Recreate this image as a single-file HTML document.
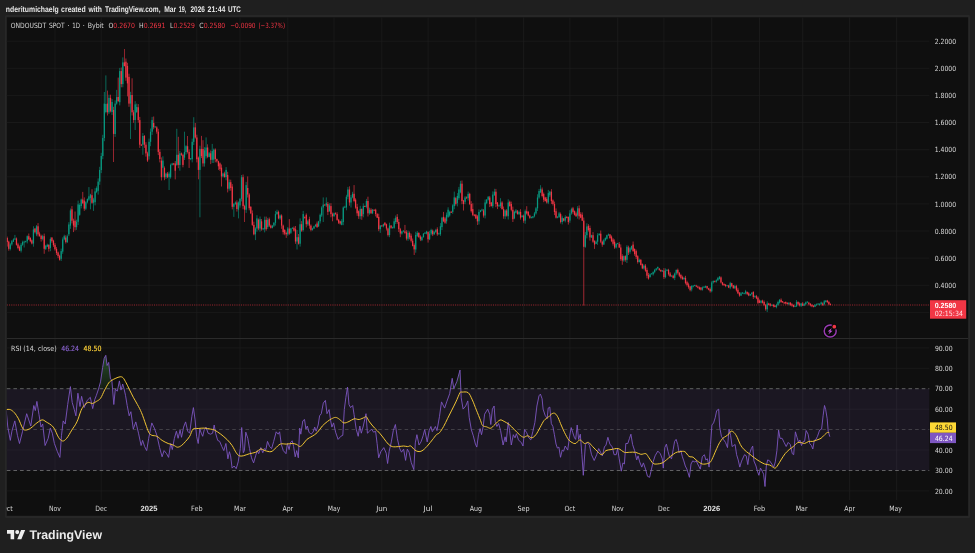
<!DOCTYPE html>
<html lang="en"><head><meta charset="utf-8"><title>ONDOUSDT SPOT 1D Bybit - TradingView</title>
<style>
html,body{margin:0;padding:0;background:#1f1f1f;}
body{width:975px;height:553px;overflow:hidden;}
svg{display:block}
svg text{font-family:"DejaVu Sans Condensed","DejaVu Sans","Liberation Sans",sans-serif;font-stretch:condensed;text-rendering:geometricPrecision;}
svg text.b{font-family:"Liberation Sans",sans-serif;font-stretch:normal;}
</style></head><body>
<svg width="975" height="553" viewBox="0 0 975 553">
<rect width="975" height="553" fill="#1f1f1f"/>
<rect x="4.9" y="15.1" width="965.3" height="503" rx="1.6" fill="#272727"/>
<rect x="6.8" y="17.3" width="961.4000000000001" height="498.49999999999994" fill="#0f0f0f"/>
<defs><clipPath id="ob"><rect x="6.8" y="338.5" width="922.5" height="50.24000000000001"/></clipPath><clipPath id="os"><rect x="6.8" y="470.46000000000004" width="922.5" height="29.539999999999964"/></clipPath>
<clipPath id="box"><rect x="6.4" y="17.3" width="961.8000000000001" height="498.49999999999994"/></clipPath>
<clipPath id="pane"><rect x="6.8" y="17.3" width="922.5" height="482.7"/></clipPath>
<linearGradient id="gob" x1="0" y1="338.5" x2="0" y2="388.74" gradientUnits="userSpaceOnUse"><stop offset="0" stop-color="#4caf50" stop-opacity="0.55"/><stop offset="1" stop-color="#4caf50" stop-opacity="0.08"/></linearGradient>
</defs>
<g stroke="#1e1e1e" stroke-width="0.7" fill="none">
<path d="M55.0 17.3V500.0"/>
<path d="M101.2 17.3V500.0"/>
<path d="M149.0 17.3V500.0"/>
<path d="M196.8 17.3V500.0"/>
<path d="M240.0 17.3V500.0"/>
<path d="M287.8 17.3V500.0"/>
<path d="M334.0 17.3V500.0"/>
<path d="M381.8 17.3V500.0"/>
<path d="M428.1 17.3V500.0"/>
<path d="M475.9 17.3V500.0"/>
<path d="M523.6 17.3V500.0"/>
<path d="M569.9 17.3V500.0"/>
<path d="M617.7 17.3V500.0"/>
<path d="M663.9 17.3V500.0"/>
<path d="M711.7 17.3V500.0"/>
<path d="M759.5 17.3V500.0"/>
<path d="M802.7 17.3V500.0"/>
<path d="M849.6 17.3V500.0"/>
<path d="M896.6 17.3V500.0"/>
<path d="M6.8 41.2H929.3"/>
<path d="M6.8 68.3H929.3"/>
<path d="M6.8 95.4H929.3"/>
<path d="M6.8 122.5H929.3"/>
<path d="M6.8 149.7H929.3"/>
<path d="M6.8 176.8H929.3"/>
<path d="M6.8 203.9H929.3"/>
<path d="M6.8 231.0H929.3"/>
<path d="M6.8 258.1H929.3"/>
<path d="M6.8 285.3H929.3"/>
<path d="M6.8 312.4H929.3"/>
<path d="M6.8 347.9H929.3"/>
<path d="M6.8 368.3H929.3"/>
<path d="M6.8 409.2H929.3"/>
<path d="M6.8 450.0H929.3"/>
<path d="M6.8 490.9H929.3"/>
</g>
<path d="M6.8 338.5H968.2" stroke="#2b2b2b" stroke-width="1.2"/>
<!-- RSI band -->
<rect x="6.8" y="388.7" width="922.5" height="81.7" fill="#7e57c2" fill-opacity="0.11"/>
<g stroke="#8f8f8f" stroke-width="0.8" stroke-dasharray="3.6 3.03" fill="none" opacity="0.8">
<path d="M6.8 388.7H929.3"/><path d="M6.8 429.6H929.3" opacity="0.6"/><path d="M6.8 470.5H929.3"/>
</g>
<g clip-path="url(#pane)">
<polygon points="4.9,388.7 4.9,412.7 6.2,410.6 7.8,427.1 10.3,440.4 11.9,431.2 14.8,420.9 17.4,435.3 19.5,443.5 22.6,431.2 26.7,413.7 30.8,426.0 33.8,405.5 35.3,410.6 36.9,401.4 39.0,414.7 41.0,427.1 42.7,424.0 45.1,445.5 48.2,438.3 50.3,428.1 52.3,433.2 54.4,443.5 57.4,451.7 59.9,457.4 61.5,435.3 63.2,420.9 65.2,424.0 67.7,404.5 70.4,386.6 72.2,402.4 74.3,409.6 75.9,415.8 77.9,393.2 80.0,406.5 81.6,396.3 84.1,407.6 87.2,400.4 90.3,397.3 92.7,408.6 94.8,399.4 96.4,395.3 98.5,389.1 100.5,381.9 102.6,367.6 104.2,358.3 105.8,355.3 107.1,365.5 108.7,362.4 110.4,378.8 111.8,379.9 113.8,404.5 115.3,389.1 117.3,391.2 119.4,380.9 121.0,390.1 122.7,384.0 124.1,389.1 125.5,395.3 127.2,405.5 129.2,415.8 130.9,411.7 133.3,429.1 135.8,421.9 138.5,433.2 141.1,445.5 142.6,440.4 144.6,446.5 146.7,450.6 148.7,438.3 151.8,422.9 154.3,428.1 156.9,435.3 159.6,447.6 162.1,456.8 164.1,450.6 166.6,453.7 168.6,457.4 170.7,443.5 172.3,449.6 174.4,438.3 176.4,431.2 178.1,438.3 180.1,430.1 181.5,437.3 183.6,427.1 185.6,421.9 187.7,431.2 189.7,433.2 191.8,416.8 193.4,407.6 195.1,419.9 196.6,436.3 198.2,443.5 199.8,429.1 201.3,433.2 202.7,436.3 204.4,429.1 206.0,427.1 208.1,433.2 210.5,434.2 212.6,433.2 214.2,425.0 215.6,433.2 217.7,440.4 219.7,441.4 221.8,446.5 223.8,450.6 225.9,443.5 227.9,458.8 229.4,451.7 230.6,455.8 232.1,468.1 234.1,466.0 236.2,468.7 238.2,461.9 240.3,448.6 241.7,427.5 243.3,452.7 244.4,450.6 245.8,432.2 247.8,438.3 249.5,448.6 251.5,457.8 253.6,462.9 255.6,455.8 257.3,450.6 258.7,453.7 260.8,447.6 262.8,452.7 264.3,448.6 265.9,449.6 267.5,441.4 269.6,446.5 271.6,448.6 273.7,441.4 276.2,431.8 278.2,434.2 279.6,431.8 281.3,444.5 283.3,450.6 286.0,453.7 287.4,443.5 289.1,449.6 290.5,442.4 292.2,440.8 293.6,446.5 295.2,456.8 296.7,450.6 298.3,457.8 299.7,428.1 300.8,434.2 302.8,420.9 304.5,419.5 305.9,429.1 307.3,426.0 309.0,432.2 311.0,434.2 313.1,432.2 314.7,427.1 316.2,431.2 318.2,425.0 319.6,415.8 321.3,413.7 323.3,403.1 325.4,400.4 327.0,413.7 329.1,409.6 330.5,419.9 331.9,427.1 333.6,422.9 335.6,432.2 338.1,439.4 340.8,436.3 342.8,435.3 344.3,409.6 345.9,397.3 347.5,387.1 349.0,404.5 350.6,407.6 352.7,405.5 354.1,414.7 356.2,429.1 358.2,436.3 359.8,426.0 361.3,433.2 363.3,426.0 366.0,413.7 367.4,433.2 369.5,431.2 371.5,429.1 373.6,432.2 375.6,431.2 377.1,443.5 378.7,457.8 380.8,451.7 383.8,447.6 386.2,453.2 387.6,463.5 389.2,451.2 391.3,441.9 393.3,430.6 395.4,424.5 397.4,438.8 399.5,448.1 401.5,452.2 403.6,449.1 405.6,460.4 407.3,449.1 409.1,452.2 411.2,462.4 413.8,469.6 415.3,442.9 416.9,434.7 419.0,445.0 421.0,441.9 423.1,435.8 424.7,429.6 427.2,441.9 429.2,430.6 430.9,426.5 432.3,431.7 435.4,426.5 437.0,430.6 439.5,416.3 441.5,401.9 444.6,408.1 446.7,401.9 449.7,393.7 452.2,378.3 453.8,388.6 456.9,381.4 460.0,370.1 461.2,397.8 463.1,409.1 465.7,406.0 467.8,400.9 469.2,417.3 471.3,429.6 473.3,435.8 475.4,444.0 476.8,447.1 478.5,434.7 480.1,428.6 481.5,434.7 483.2,426.5 484.6,414.2 487.7,409.1 489.7,414.2 490.8,424.5 492.4,409.1 494.1,406.0 495.3,422.4 496.9,426.5 498.6,423.5 500.6,430.6 503.1,445.0 505.1,436.8 506.2,441.9 508.2,422.4 509.6,430.6 511.3,445.0 513.3,434.7 515.0,437.8 516.4,433.7 518.5,439.9 521.5,442.9 523.0,446.0 524.6,429.6 526.7,432.7 528.7,437.8 530.8,439.9 532.8,431.7 534.9,422.4 536.9,406.0 539.0,395.8 540.4,394.1 542.1,398.8 543.1,409.1 545.1,415.3 547.2,418.3 548.2,408.1 549.8,407.1 551.3,423.5 552.9,426.5 554.4,434.7 556.0,444.0 557.4,448.1 558.9,447.1 560.5,457.3 562.2,450.1 563.6,451.2 565.2,446.0 567.7,450.1 569.7,435.8 571.2,427.6 572.8,432.7 574.5,437.8 575.7,439.4 577.2,425.0 578.6,439.4 580.3,434.2 581.9,454.7 583.3,475.3 585.4,444.5 587.4,442.4 589.5,445.5 591.5,454.7 594.2,460.5 596.7,454.7 598.7,448.6 600.8,452.7 602.4,455.8 604.5,446.5 605.9,445.5 607.9,437.3 610.0,444.5 612.1,446.5 614.1,454.7 616.2,454.7 617.6,448.6 619.2,458.8 621.3,471.2 622.9,462.9 624.4,464.0 625.8,443.5 627.8,443.5 629.5,438.3 630.9,434.2 632.6,444.5 634.6,450.6 636.7,459.9 638.1,455.8 639.7,461.9 641.8,467.1 643.4,462.9 645.5,469.1 647.5,476.3 649.6,477.3 651.0,471.2 653.1,461.9 655.1,455.8 657.8,451.1 660.3,453.7 662.3,458.8 663.3,468.1 664.8,447.6 666.4,444.1 668.1,451.7 669.5,456.8 671.5,458.8 673.2,449.6 674.6,441.4 676.1,439.4 677.7,444.5 679.1,452.7 680.8,450.6 682.4,456.8 683.8,460.9 685.3,466.0 686.9,469.1 687.9,472.2 689.4,477.3 691.0,464.0 692.7,460.9 694.7,461.9 696.2,460.9 698.2,465.0 700.3,469.1 702.3,456.8 704.4,454.7 705.8,459.9 707.4,458.8 709.1,467.1 710.5,444.5 711.9,425.0 713.6,422.9 715.2,417.8 716.7,410.6 718.7,409.2 719.7,427.1 721.4,436.3 723.4,439.4 725.5,442.4 727.5,447.6 729.0,429.1 730.6,435.3 732.1,446.5 733.7,445.5 735.1,444.5 736.6,454.7 738.2,459.9 739.8,467.1 741.3,461.9 742.1,459.9 744.5,454.7 746.2,455.8 747.8,464.6 749.2,454.7 751.3,448.6 752.7,446.1 753.9,460.9 756.0,466.0 757.4,471.2 758.9,475.3 760.5,468.1 762.2,471.2 763.6,474.2 765.0,486.5 766.3,466.0 767.7,459.9 769.7,460.9 771.8,464.0 773.8,467.1 775.3,461.9 776.9,450.6 778.6,430.1 780.0,438.3 782.1,438.3 784.1,442.4 786.2,446.5 788.2,442.4 790.3,444.5 792.3,453.7 793.7,454.7 795.4,431.8 797.0,437.3 798.5,442.4 799.9,440.0 801.5,445.5 803.2,441.4 804.6,441.4 806.1,430.5 808.1,434.2 809.7,443.5 811.4,445.5 812.8,449.0 814.3,440.4 815.9,439.4 817.5,436.3 819.6,430.1 821.6,429.1 823.1,415.8 824.5,405.5 825.7,409.6 827.2,418.8 828.2,431.2 829.8,436.7 829.8,388.7" fill="url(#gob)" clip-path="url(#ob)"/>
<polyline points="4.9,412.7 6.2,410.6 7.8,427.1 10.3,440.4 11.9,431.2 14.8,420.9 17.4,435.3 19.5,443.5 22.6,431.2 26.7,413.7 30.8,426.0 33.8,405.5 35.3,410.6 36.9,401.4 39.0,414.7 41.0,427.1 42.7,424.0 45.1,445.5 48.2,438.3 50.3,428.1 52.3,433.2 54.4,443.5 57.4,451.7 59.9,457.4 61.5,435.3 63.2,420.9 65.2,424.0 67.7,404.5 70.4,386.6 72.2,402.4 74.3,409.6 75.9,415.8 77.9,393.2 80.0,406.5 81.6,396.3 84.1,407.6 87.2,400.4 90.3,397.3 92.7,408.6 94.8,399.4 96.4,395.3 98.5,389.1 100.5,381.9 102.6,367.6 104.2,358.3 105.8,355.3 107.1,365.5 108.7,362.4 110.4,378.8 111.8,379.9 113.8,404.5 115.3,389.1 117.3,391.2 119.4,380.9 121.0,390.1 122.7,384.0 124.1,389.1 125.5,395.3 127.2,405.5 129.2,415.8 130.9,411.7 133.3,429.1 135.8,421.9 138.5,433.2 141.1,445.5 142.6,440.4 144.6,446.5 146.7,450.6 148.7,438.3 151.8,422.9 154.3,428.1 156.9,435.3 159.6,447.6 162.1,456.8 164.1,450.6 166.6,453.7 168.6,457.4 170.7,443.5 172.3,449.6 174.4,438.3 176.4,431.2 178.1,438.3 180.1,430.1 181.5,437.3 183.6,427.1 185.6,421.9 187.7,431.2 189.7,433.2 191.8,416.8 193.4,407.6 195.1,419.9 196.6,436.3 198.2,443.5 199.8,429.1 201.3,433.2 202.7,436.3 204.4,429.1 206.0,427.1 208.1,433.2 210.5,434.2 212.6,433.2 214.2,425.0 215.6,433.2 217.7,440.4 219.7,441.4 221.8,446.5 223.8,450.6 225.9,443.5 227.9,458.8 229.4,451.7 230.6,455.8 232.1,468.1 234.1,466.0 236.2,468.7 238.2,461.9 240.3,448.6 241.7,427.5 243.3,452.7 244.4,450.6 245.8,432.2 247.8,438.3 249.5,448.6 251.5,457.8 253.6,462.9 255.6,455.8 257.3,450.6 258.7,453.7 260.8,447.6 262.8,452.7 264.3,448.6 265.9,449.6 267.5,441.4 269.6,446.5 271.6,448.6 273.7,441.4 276.2,431.8 278.2,434.2 279.6,431.8 281.3,444.5 283.3,450.6 286.0,453.7 287.4,443.5 289.1,449.6 290.5,442.4 292.2,440.8 293.6,446.5 295.2,456.8 296.7,450.6 298.3,457.8 299.7,428.1 300.8,434.2 302.8,420.9 304.5,419.5 305.9,429.1 307.3,426.0 309.0,432.2 311.0,434.2 313.1,432.2 314.7,427.1 316.2,431.2 318.2,425.0 319.6,415.8 321.3,413.7 323.3,403.1 325.4,400.4 327.0,413.7 329.1,409.6 330.5,419.9 331.9,427.1 333.6,422.9 335.6,432.2 338.1,439.4 340.8,436.3 342.8,435.3 344.3,409.6 345.9,397.3 347.5,387.1 349.0,404.5 350.6,407.6 352.7,405.5 354.1,414.7 356.2,429.1 358.2,436.3 359.8,426.0 361.3,433.2 363.3,426.0 366.0,413.7 367.4,433.2 369.5,431.2 371.5,429.1 373.6,432.2 375.6,431.2 377.1,443.5 378.7,457.8 380.8,451.7 383.8,447.6 386.2,453.2 387.6,463.5 389.2,451.2 391.3,441.9 393.3,430.6 395.4,424.5 397.4,438.8 399.5,448.1 401.5,452.2 403.6,449.1 405.6,460.4 407.3,449.1 409.1,452.2 411.2,462.4 413.8,469.6 415.3,442.9 416.9,434.7 419.0,445.0 421.0,441.9 423.1,435.8 424.7,429.6 427.2,441.9 429.2,430.6 430.9,426.5 432.3,431.7 435.4,426.5 437.0,430.6 439.5,416.3 441.5,401.9 444.6,408.1 446.7,401.9 449.7,393.7 452.2,378.3 453.8,388.6 456.9,381.4 460.0,370.1 461.2,397.8 463.1,409.1 465.7,406.0 467.8,400.9 469.2,417.3 471.3,429.6 473.3,435.8 475.4,444.0 476.8,447.1 478.5,434.7 480.1,428.6 481.5,434.7 483.2,426.5 484.6,414.2 487.7,409.1 489.7,414.2 490.8,424.5 492.4,409.1 494.1,406.0 495.3,422.4 496.9,426.5 498.6,423.5 500.6,430.6 503.1,445.0 505.1,436.8 506.2,441.9 508.2,422.4 509.6,430.6 511.3,445.0 513.3,434.7 515.0,437.8 516.4,433.7 518.5,439.9 521.5,442.9 523.0,446.0 524.6,429.6 526.7,432.7 528.7,437.8 530.8,439.9 532.8,431.7 534.9,422.4 536.9,406.0 539.0,395.8 540.4,394.1 542.1,398.8 543.1,409.1 545.1,415.3 547.2,418.3 548.2,408.1 549.8,407.1 551.3,423.5 552.9,426.5 554.4,434.7 556.0,444.0 557.4,448.1 558.9,447.1 560.5,457.3 562.2,450.1 563.6,451.2 565.2,446.0 567.7,450.1 569.7,435.8 571.2,427.6 572.8,432.7 574.5,437.8 575.7,439.4 577.2,425.0 578.6,439.4 580.3,434.2 581.9,454.7 583.3,475.3 585.4,444.5 587.4,442.4 589.5,445.5 591.5,454.7 594.2,460.5 596.7,454.7 598.7,448.6 600.8,452.7 602.4,455.8 604.5,446.5 605.9,445.5 607.9,437.3 610.0,444.5 612.1,446.5 614.1,454.7 616.2,454.7 617.6,448.6 619.2,458.8 621.3,471.2 622.9,462.9 624.4,464.0 625.8,443.5 627.8,443.5 629.5,438.3 630.9,434.2 632.6,444.5 634.6,450.6 636.7,459.9 638.1,455.8 639.7,461.9 641.8,467.1 643.4,462.9 645.5,469.1 647.5,476.3 649.6,477.3 651.0,471.2 653.1,461.9 655.1,455.8 657.8,451.1 660.3,453.7 662.3,458.8 663.3,468.1 664.8,447.6 666.4,444.1 668.1,451.7 669.5,456.8 671.5,458.8 673.2,449.6 674.6,441.4 676.1,439.4 677.7,444.5 679.1,452.7 680.8,450.6 682.4,456.8 683.8,460.9 685.3,466.0 686.9,469.1 687.9,472.2 689.4,477.3 691.0,464.0 692.7,460.9 694.7,461.9 696.2,460.9 698.2,465.0 700.3,469.1 702.3,456.8 704.4,454.7 705.8,459.9 707.4,458.8 709.1,467.1 710.5,444.5 711.9,425.0 713.6,422.9 715.2,417.8 716.7,410.6 718.7,409.2 719.7,427.1 721.4,436.3 723.4,439.4 725.5,442.4 727.5,447.6 729.0,429.1 730.6,435.3 732.1,446.5 733.7,445.5 735.1,444.5 736.6,454.7 738.2,459.9 739.8,467.1 741.3,461.9 742.1,459.9 744.5,454.7 746.2,455.8 747.8,464.6 749.2,454.7 751.3,448.6 752.7,446.1 753.9,460.9 756.0,466.0 757.4,471.2 758.9,475.3 760.5,468.1 762.2,471.2 763.6,474.2 765.0,486.5 766.3,466.0 767.7,459.9 769.7,460.9 771.8,464.0 773.8,467.1 775.3,461.9 776.9,450.6 778.6,430.1 780.0,438.3 782.1,438.3 784.1,442.4 786.2,446.5 788.2,442.4 790.3,444.5 792.3,453.7 793.7,454.7 795.4,431.8 797.0,437.3 798.5,442.4 799.9,440.0 801.5,445.5 803.2,441.4 804.6,441.4 806.1,430.5 808.1,434.2 809.7,443.5 811.4,445.5 812.8,449.0 814.3,440.4 815.9,439.4 817.5,436.3 819.6,430.1 821.6,429.1 823.1,415.8 824.5,405.5 825.7,409.6 827.2,418.8 828.2,431.2 829.8,436.7" fill="none" stroke="#7e57c2" stroke-width="0.9" stroke-linejoin="round"/>
<path d="M4.9 410.2C5.1 410.1 5.3 409.7 6.2 409.6C7.0 409.5 8.9 409.1 10.3 409.6C11.6 410.1 13.0 411.2 14.4 412.7C15.7 414.2 17.1 416.3 18.5 418.8C19.8 421.4 21.4 426.2 22.6 428.1C23.8 430.0 24.3 430.1 25.6 430.1C27.0 430.1 28.9 429.3 30.8 428.1C32.6 426.9 35.0 424.3 36.9 422.9C38.8 421.6 40.5 420.0 42.1 419.9C43.6 419.7 44.3 420.7 46.2 421.9C48.0 423.1 51.3 424.5 53.3 427.1C55.4 429.6 56.9 435.0 58.5 437.3C60.0 439.6 61.2 440.8 62.6 441.0C63.9 441.2 65.1 440.1 66.7 438.3C68.2 436.5 70.1 432.9 71.8 430.1C73.5 427.4 75.4 425.2 76.9 421.9C78.5 418.7 79.8 413.4 81.0 410.6C82.2 407.9 82.9 406.9 84.1 405.5C85.3 404.1 86.8 402.8 88.2 402.4C89.6 402.1 90.9 403.6 92.3 403.5C93.7 403.3 95.0 402.3 96.4 401.4C97.8 400.6 99.1 400.2 100.5 398.3C101.9 396.5 103.2 392.7 104.6 390.1C106.0 387.6 107.5 384.6 108.7 382.9C109.9 381.3 110.6 381.1 111.8 380.3C113.0 379.5 114.5 378.8 115.9 378.2C117.3 377.6 118.8 376.9 120.0 376.8C121.2 376.7 122.1 376.8 123.1 377.8C124.1 378.8 125.1 381.1 126.2 382.9C127.2 384.8 128.0 386.7 129.2 389.1C130.4 391.5 132.0 394.7 133.3 397.3C134.7 399.9 136.1 401.9 137.4 404.5C138.8 407.1 140.2 409.4 141.5 412.7C142.9 415.9 144.4 420.7 145.6 424.0C146.8 427.2 147.7 430.3 148.7 432.2C149.7 434.1 150.4 434.6 151.8 435.3C153.2 435.9 155.2 435.4 156.9 436.3C158.6 437.1 160.2 439.2 162.1 440.4C163.9 441.6 166.3 442.7 168.2 443.5C170.1 444.2 171.8 444.5 173.3 445.1C174.9 445.7 176.1 447.1 177.4 447.2C178.8 447.2 180.2 446.5 181.5 445.5C182.9 444.6 184.3 442.9 185.6 441.4C187.0 439.9 188.5 438.3 189.7 436.3C191.0 434.2 191.7 430.4 193.1 429.1C194.5 427.8 196.3 428.7 198.2 428.5C200.1 428.3 202.3 428.0 204.4 428.1C206.4 428.2 208.8 428.8 210.5 429.1C212.2 429.4 212.9 429.3 214.6 430.1C216.3 431.0 218.7 432.7 220.8 434.2C222.8 435.8 225.0 437.5 226.9 439.4C228.8 441.2 230.5 443.3 232.1 445.5C233.6 447.7 235.0 451.0 236.2 452.7C237.4 454.4 238.0 455.3 239.2 455.8C240.4 456.3 241.6 456.1 243.3 455.8C245.0 455.4 247.4 454.3 249.5 453.7C251.5 453.1 253.8 453.1 255.6 452.3C257.5 451.5 259.2 449.3 260.8 449.0C262.3 448.7 263.2 450.2 264.9 450.6C266.6 451.1 269.3 452.0 271.0 451.7C272.7 451.3 273.6 449.9 275.1 448.6C276.7 447.3 278.4 444.8 280.3 444.1C282.1 443.3 284.4 444.2 286.4 444.1C288.5 444.0 290.9 443.4 292.6 443.5C294.3 443.5 295.5 444.0 296.7 444.5C297.9 445.0 298.7 446.5 299.7 446.5C300.8 446.5 301.6 445.7 302.8 444.5C304.0 443.3 305.4 440.7 306.9 439.4C308.5 438.0 310.3 437.4 312.1 436.3C313.8 435.2 315.5 434.3 317.2 432.6C318.9 430.9 320.6 427.9 322.3 426.0C324.0 424.2 325.9 422.7 327.4 421.5C329.0 420.3 330.2 419.5 331.5 418.8C332.9 418.2 334.3 417.3 335.6 417.4C337.0 417.5 338.4 418.5 339.7 419.5C341.1 420.4 342.3 422.6 343.8 422.9C345.4 423.3 347.3 422.2 349.0 421.5C350.7 420.8 352.4 419.2 354.1 418.8C355.8 418.5 357.5 419.7 359.2 419.5C360.9 419.2 363.2 417.9 364.4 417.4C365.6 417.0 365.6 416.0 366.4 416.8C367.3 417.5 368.1 420.0 369.5 421.9C370.9 423.8 372.9 426.2 374.6 428.1C376.3 430.0 378.2 431.4 379.7 433.2C381.3 435.0 382.7 437.1 384.1 438.8C385.5 440.6 386.8 442.7 388.2 444.0C389.6 445.3 390.6 446.2 392.3 446.6C394.0 447.1 396.6 446.7 398.5 446.6C400.3 446.5 402.1 446.0 403.6 446.0C405.1 446.0 406.5 446.6 407.7 446.6C408.9 446.6 409.6 445.4 410.8 446.0C412.0 446.6 413.5 449.2 414.9 450.1C416.2 451.1 417.6 451.6 419.0 451.6C420.3 451.6 421.5 451.2 423.1 450.1C424.6 449.0 426.7 446.7 428.2 445.0C429.7 443.3 430.9 441.6 432.3 439.9C433.7 438.2 435.2 435.9 436.4 434.7C437.6 433.5 438.3 434.1 439.5 432.7C440.7 431.3 442.2 428.9 443.6 426.5C445.0 424.1 446.3 421.1 447.7 418.3C449.1 415.6 450.4 412.9 451.8 410.1C453.2 407.4 454.5 404.8 455.9 401.9C457.3 399.0 459.0 394.3 460.0 392.7C461.0 391.1 460.7 392.1 462.1 392.1C463.4 392.1 466.5 391.4 468.2 392.7C469.9 394.0 470.9 397.0 472.3 399.9C473.7 402.8 475.0 406.7 476.4 410.1C477.8 413.5 479.5 417.8 480.5 420.4C481.5 422.9 481.5 424.4 482.6 425.5C483.6 426.6 485.3 426.5 486.7 426.9C488.0 427.4 489.4 428.6 490.8 428.2C492.1 427.8 493.3 425.9 494.9 424.5C496.4 423.1 498.5 420.5 500.0 420.0C501.5 419.5 502.6 420.7 504.1 421.4C505.6 422.2 507.5 423.1 509.2 424.5C510.9 425.9 512.6 427.9 514.4 429.6C516.1 431.3 517.9 433.5 519.5 434.7C521.0 436.0 522.2 437.0 523.6 437.2C525.0 437.4 526.3 435.7 527.7 435.8C529.1 435.9 530.4 438.0 531.8 437.8C533.2 437.6 534.5 436.5 535.9 434.7C537.3 433.0 538.6 430.0 540.0 427.6C541.4 425.2 542.7 422.1 544.1 420.4C545.5 418.7 547.0 418.3 548.2 417.3C549.4 416.3 550.3 414.9 551.3 414.2C552.3 413.5 553.3 412.9 554.4 413.2C555.4 413.5 556.4 414.6 557.4 416.3C558.5 418.0 559.3 420.7 560.5 423.5C561.7 426.2 563.2 430.0 564.6 432.7C566.0 435.4 567.4 438.2 568.7 439.9C570.1 441.6 571.9 442.4 572.8 442.9C573.7 443.5 573.6 443.4 574.1 443.5C574.6 443.5 575.4 443.6 575.9 443.4C576.4 443.1 576.5 442.6 577.2 442.0C577.9 441.5 579.1 439.7 580.3 440.0C581.5 440.2 583.0 443.1 584.4 443.5C585.7 443.9 587.1 441.9 588.5 442.4C589.8 442.9 591.0 445.0 592.6 446.5C594.1 448.1 596.2 450.3 597.7 451.7C599.2 453.0 600.4 454.9 601.8 454.7C603.2 454.6 604.4 451.5 605.9 450.6C607.4 449.8 609.0 450.0 611.0 449.6C613.1 449.3 616.0 448.1 618.2 448.6C620.4 449.0 622.5 451.7 624.4 452.3C626.2 452.9 627.6 452.3 629.5 452.3C631.4 452.3 633.8 451.9 635.6 452.3C637.5 452.6 639.1 454.1 640.8 454.3C642.5 454.6 644.5 453.1 645.9 453.7C647.3 454.3 647.8 456.2 649.0 457.8C650.2 459.4 651.7 462.3 653.1 463.4C654.4 464.4 655.6 464.0 657.2 464.0C658.7 463.9 660.8 463.6 662.3 462.9C663.8 462.3 665.0 461.0 666.4 459.9C667.8 458.8 669.0 457.6 670.5 456.4C672.1 455.2 674.1 453.5 675.6 452.7C677.2 451.9 678.2 451.8 679.7 451.7C681.3 451.5 683.3 450.9 684.9 451.7C686.4 452.5 687.6 455.5 689.0 456.4C690.3 457.3 691.7 456.5 693.1 457.2C694.4 458.0 695.6 459.8 697.2 460.9C698.7 462.0 700.6 463.5 702.3 464.0C704.0 464.4 706.1 463.9 707.4 463.6C708.8 463.2 709.5 463.2 710.5 461.9C711.5 460.6 712.6 458.0 713.6 455.8C714.6 453.5 715.6 450.8 716.7 448.6C717.7 446.4 718.7 444.1 719.7 442.4C720.8 440.7 721.8 439.4 722.8 438.3C723.8 437.3 724.9 437.0 725.9 436.3C726.9 435.5 728.1 434.7 729.0 433.8C729.8 433.0 730.2 431.4 731.0 431.2C731.9 430.9 733.1 431.6 734.1 432.6C735.1 433.6 736.2 435.3 737.2 437.3C738.2 439.3 739.1 442.4 740.3 444.5C741.4 446.5 742.6 448.1 744.1 449.6C745.6 451.2 747.5 452.4 749.2 453.7C750.9 455.1 752.6 456.6 754.4 457.8C756.1 459.1 757.8 460.3 759.5 461.3C761.2 462.3 762.9 463.4 764.6 464.0C766.3 464.6 768.4 464.5 769.7 465.0C771.1 465.5 771.9 466.5 772.8 467.1C773.7 467.6 774.4 468.4 775.3 468.1C776.1 467.7 777.0 466.4 777.9 465.0C778.9 463.6 779.8 461.8 781.0 459.9C782.2 458.0 783.8 455.4 785.1 453.7C786.5 452.0 787.9 450.8 789.2 449.6C790.6 448.4 792.0 447.7 793.3 446.5C794.7 445.4 796.2 443.5 797.4 442.8C798.6 442.2 799.3 442.3 800.5 442.4C801.7 442.5 803.2 443.6 804.6 443.5C806.0 443.3 807.4 441.8 808.7 441.4C810.1 441.1 811.5 441.6 812.8 441.4C814.2 441.2 815.6 440.5 816.9 440.0C818.3 439.5 819.8 439.1 821.0 438.3C822.2 437.5 823.1 436.2 824.1 435.3C825.1 434.3 826.3 433.0 827.2 432.6C828.0 432.1 828.9 432.6 829.2 432.6" fill="none" stroke="#f0c534" stroke-width="1"/>
<!-- price line -->
<path d="M6.8 305.0H929.3" stroke="#f23645" stroke-width="0.9" stroke-dasharray="1.1 1.13" opacity="0.68"/>
<g>
<path d="M7.21 236.6V246.6" stroke="#f23645" stroke-width="0.72" opacity="0.9"/>
<rect x="6.58" y="238.0" width="1.26" height="4.1" fill="#f23645"/>
<path d="M8.75 240.7V250.7" stroke="#f23645" stroke-width="0.72" opacity="0.9"/>
<rect x="8.12" y="241.6" width="1.26" height="7.2" fill="#f23645"/>
<path d="M10.29 243.1V250.4" stroke="#089981" stroke-width="0.72" opacity="0.9"/>
<rect x="9.66" y="244.4" width="1.26" height="4.5" fill="#089981"/>
<path d="M11.84 240.0V245.6" stroke="#089981" stroke-width="0.72" opacity="0.9"/>
<rect x="11.21" y="241.2" width="1.26" height="3.2" fill="#089981"/>
<path d="M13.38 238.3V242.0" stroke="#089981" stroke-width="0.72" opacity="0.9"/>
<rect x="12.75" y="239.4" width="1.26" height="2.3" fill="#089981"/>
<path d="M14.92 234.9V240.0" stroke="#089981" stroke-width="0.72" opacity="0.9"/>
<rect x="14.29" y="238.5" width="1.26" height="0.9" fill="#089981"/>
<path d="M16.46 237.5V245.6" stroke="#f23645" stroke-width="0.72" opacity="0.9"/>
<rect x="15.83" y="238.5" width="1.26" height="6.3" fill="#f23645"/>
<path d="M18.00 242.8V249.3" stroke="#f23645" stroke-width="0.72" opacity="0.9"/>
<rect x="17.37" y="244.4" width="1.26" height="3.6" fill="#f23645"/>
<path d="M19.54 245.6V251.1" stroke="#f23645" stroke-width="0.72" opacity="0.9"/>
<rect x="18.91" y="247.1" width="1.26" height="3.6" fill="#f23645"/>
<path d="M21.08 243.1V252.5" stroke="#089981" stroke-width="0.72" opacity="0.9"/>
<rect x="20.45" y="244.8" width="1.26" height="5.9" fill="#089981"/>
<path d="M22.63 240.7V245.8" stroke="#089981" stroke-width="0.72" opacity="0.9"/>
<rect x="22.00" y="242.1" width="1.26" height="2.7" fill="#089981"/>
<path d="M24.17 240.7V247.5" stroke="#089981" stroke-width="0.72" opacity="0.9"/>
<rect x="23.54" y="241.6" width="1.26" height="0.9" fill="#089981"/>
<path d="M25.71 240.7V242.5" stroke="#089981" stroke-width="0.72" opacity="0.9"/>
<rect x="25.08" y="241.2" width="1.26" height="0.9" fill="#089981"/>
<path d="M27.25 235.4V243.4" stroke="#089981" stroke-width="0.72" opacity="0.9"/>
<rect x="26.62" y="236.2" width="1.26" height="5.0" fill="#089981"/>
<path d="M28.79 233.5V239.8" stroke="#f23645" stroke-width="0.72" opacity="0.9"/>
<rect x="28.16" y="236.2" width="1.26" height="3.2" fill="#f23645"/>
<path d="M30.33 237.2V242.3" stroke="#f23645" stroke-width="0.72" opacity="0.9"/>
<rect x="29.70" y="238.0" width="1.26" height="3.2" fill="#f23645"/>
<path d="M31.88 239.4V244.4" stroke="#f23645" stroke-width="0.72" opacity="0.9"/>
<rect x="31.25" y="240.3" width="1.26" height="3.2" fill="#f23645"/>
<path d="M33.42 226.3V246.7" stroke="#089981" stroke-width="0.72" opacity="0.9"/>
<rect x="32.79" y="229.5" width="1.26" height="14.0" fill="#089981"/>
<path d="M34.96 228.1V233.4" stroke="#f23645" stroke-width="0.72" opacity="0.9"/>
<rect x="34.33" y="228.6" width="1.26" height="3.6" fill="#f23645"/>
<path d="M36.50 225.1V236.2" stroke="#089981" stroke-width="0.72" opacity="0.9"/>
<rect x="35.87" y="226.3" width="1.26" height="8.1" fill="#089981"/>
<path d="M38.04 223.1V236.5" stroke="#f23645" stroke-width="0.72" opacity="0.9"/>
<rect x="37.41" y="226.3" width="1.26" height="8.1" fill="#f23645"/>
<path d="M39.58 231.8V236.6" stroke="#f23645" stroke-width="0.72" opacity="0.9"/>
<rect x="38.95" y="233.5" width="1.26" height="2.7" fill="#f23645"/>
<path d="M41.13 234.6V241.6" stroke="#f23645" stroke-width="0.72" opacity="0.9"/>
<rect x="40.50" y="235.8" width="1.26" height="3.2" fill="#f23645"/>
<path d="M42.67 234.8V240.4" stroke="#089981" stroke-width="0.72" opacity="0.9"/>
<rect x="42.04" y="236.2" width="1.26" height="2.7" fill="#089981"/>
<path d="M44.21 233.6V253.8" stroke="#f23645" stroke-width="0.72" opacity="0.9"/>
<rect x="43.58" y="236.2" width="1.26" height="12.6" fill="#f23645"/>
<path d="M45.75 244.8V250.0" stroke="#089981" stroke-width="0.72" opacity="0.9"/>
<rect x="45.12" y="245.7" width="1.26" height="3.2" fill="#089981"/>
<path d="M47.29 243.7V246.9" stroke="#089981" stroke-width="0.72" opacity="0.9"/>
<rect x="46.66" y="244.8" width="1.26" height="1.8" fill="#089981"/>
<path d="M48.83 244.3V251.6" stroke="#f23645" stroke-width="0.72" opacity="0.9"/>
<rect x="48.20" y="244.8" width="1.26" height="4.1" fill="#f23645"/>
<path d="M50.38 237.3V251.2" stroke="#089981" stroke-width="0.72" opacity="0.9"/>
<rect x="49.75" y="238.9" width="1.26" height="9.0" fill="#089981"/>
<path d="M51.92 237.1V242.8" stroke="#f23645" stroke-width="0.72" opacity="0.9"/>
<rect x="51.29" y="237.6" width="1.26" height="3.6" fill="#f23645"/>
<path d="M53.46 239.7V246.9" stroke="#f23645" stroke-width="0.72" opacity="0.9"/>
<rect x="52.83" y="240.7" width="1.26" height="4.5" fill="#f23645"/>
<path d="M55.00 243.0V250.7" stroke="#f23645" stroke-width="0.72" opacity="0.9"/>
<rect x="54.37" y="244.8" width="1.26" height="4.5" fill="#f23645"/>
<path d="M56.54 247.1V255.0" stroke="#f23645" stroke-width="0.72" opacity="0.9"/>
<rect x="55.91" y="248.9" width="1.26" height="4.1" fill="#f23645"/>
<path d="M58.08 251.5V258.1" stroke="#f23645" stroke-width="0.72" opacity="0.9"/>
<rect x="57.45" y="252.5" width="1.26" height="3.6" fill="#f23645"/>
<path d="M59.62 254.6V260.6" stroke="#f23645" stroke-width="0.72" opacity="0.9"/>
<rect x="58.99" y="255.7" width="1.26" height="4.1" fill="#f23645"/>
<path d="M61.17 248.6V261.0" stroke="#089981" stroke-width="0.72" opacity="0.9"/>
<rect x="60.54" y="251.1" width="1.26" height="7.7" fill="#089981"/>
<path d="M62.71 237.4V253.8" stroke="#089981" stroke-width="0.72" opacity="0.9"/>
<rect x="62.08" y="239.4" width="1.26" height="12.2" fill="#089981"/>
<path d="M64.25 234.7V240.3" stroke="#089981" stroke-width="0.72" opacity="0.9"/>
<rect x="63.62" y="236.2" width="1.26" height="3.2" fill="#089981"/>
<path d="M65.79 235.3V243.5" stroke="#f23645" stroke-width="0.72" opacity="0.9"/>
<rect x="65.16" y="237.6" width="1.26" height="4.5" fill="#f23645"/>
<path d="M67.33 234.5V243.0" stroke="#089981" stroke-width="0.72" opacity="0.9"/>
<rect x="66.70" y="236.2" width="1.26" height="5.9" fill="#089981"/>
<path d="M68.87 222.2V236.1" stroke="#089981" stroke-width="0.72" opacity="0.9"/>
<rect x="68.24" y="224.5" width="1.26" height="9.8" fill="#089981"/>
<path d="M70.42 208.5V228.8" stroke="#089981" stroke-width="0.72" opacity="0.9"/>
<rect x="69.79" y="210.4" width="1.26" height="15.2" fill="#089981"/>
<path d="M71.96 206.1V223.4" stroke="#f23645" stroke-width="0.72" opacity="0.9"/>
<rect x="71.33" y="209.3" width="1.26" height="11.4" fill="#f23645"/>
<path d="M73.50 218.7V232.1" stroke="#f23645" stroke-width="0.72" opacity="0.9"/>
<rect x="72.87" y="220.7" width="1.26" height="4.9" fill="#f23645"/>
<path d="M75.04 211.5V230.4" stroke="#f23645" stroke-width="0.72" opacity="0.9"/>
<rect x="74.41" y="220.7" width="1.26" height="6.5" fill="#f23645"/>
<path d="M76.58 219.7V229.9" stroke="#089981" stroke-width="0.72" opacity="0.9"/>
<rect x="75.95" y="221.8" width="1.26" height="5.4" fill="#089981"/>
<path d="M78.12 200.6V225.0" stroke="#089981" stroke-width="0.72" opacity="0.9"/>
<rect x="77.49" y="204.4" width="1.26" height="17.4" fill="#089981"/>
<path d="M79.67 203.3V215.8" stroke="#089981" stroke-width="0.72" opacity="0.9"/>
<rect x="79.04" y="205.0" width="1.26" height="9.8" fill="#089981"/>
<path d="M81.21 198.6V208.4" stroke="#089981" stroke-width="0.72" opacity="0.9"/>
<rect x="80.58" y="199.5" width="1.26" height="6.5" fill="#089981"/>
<path d="M82.75 191.9V203.7" stroke="#f23645" stroke-width="0.72" opacity="0.9"/>
<rect x="82.12" y="199.5" width="1.26" height="3.8" fill="#f23645"/>
<path d="M84.29 197.4V210.9" stroke="#f23645" stroke-width="0.72" opacity="0.9"/>
<rect x="83.66" y="200.6" width="1.26" height="8.1" fill="#f23645"/>
<path d="M85.83 201.2V210.1" stroke="#089981" stroke-width="0.72" opacity="0.9"/>
<rect x="85.20" y="202.2" width="1.26" height="6.5" fill="#089981"/>
<path d="M87.37 198.4V203.4" stroke="#089981" stroke-width="0.72" opacity="0.9"/>
<rect x="86.74" y="199.0" width="1.26" height="3.3" fill="#089981"/>
<path d="M88.92 187.1V200.8" stroke="#089981" stroke-width="0.72" opacity="0.9"/>
<rect x="88.29" y="196.3" width="1.26" height="3.3" fill="#089981"/>
<path d="M90.46 193.8V209.3" stroke="#089981" stroke-width="0.72" opacity="0.9"/>
<rect x="89.83" y="194.6" width="1.26" height="3.3" fill="#089981"/>
<path d="M92.00 189.2V203.8" stroke="#f23645" stroke-width="0.72" opacity="0.9"/>
<rect x="91.37" y="195.2" width="1.26" height="7.6" fill="#f23645"/>
<path d="M93.54 197.8V210.9" stroke="#089981" stroke-width="0.72" opacity="0.9"/>
<rect x="92.91" y="199.5" width="1.26" height="3.3" fill="#089981"/>
<path d="M95.08 188.2V205.4" stroke="#089981" stroke-width="0.72" opacity="0.9"/>
<rect x="94.45" y="191.4" width="1.26" height="10.8" fill="#089981"/>
<path d="M96.62 186.4V193.1" stroke="#089981" stroke-width="0.72" opacity="0.9"/>
<rect x="95.99" y="188.1" width="1.26" height="3.8" fill="#089981"/>
<path d="M98.16 178.4V194.6" stroke="#089981" stroke-width="0.72" opacity="0.9"/>
<rect x="97.53" y="181.6" width="1.26" height="9.2" fill="#089981"/>
<path d="M99.71 166.8V184.8" stroke="#089981" stroke-width="0.72" opacity="0.9"/>
<rect x="99.08" y="170.0" width="1.26" height="11.6" fill="#089981"/>
<path d="M101.25 152.8V173.1" stroke="#089981" stroke-width="0.72" opacity="0.9"/>
<rect x="100.62" y="156.0" width="1.26" height="14.0" fill="#089981"/>
<path d="M102.79 134.8V159.2" stroke="#089981" stroke-width="0.72" opacity="0.9"/>
<rect x="102.16" y="138.0" width="1.26" height="18.0" fill="#089981"/>
<path d="M104.33 92.0V141.2" stroke="#089981" stroke-width="0.72" opacity="0.9"/>
<rect x="103.70" y="103.6" width="1.26" height="34.4" fill="#089981"/>
<path d="M105.87 75.4V113.3" stroke="#089981" stroke-width="0.72" opacity="0.9"/>
<rect x="105.24" y="104.0" width="1.26" height="8.0" fill="#089981"/>
<path d="M107.41 90.6V115.5" stroke="#f23645" stroke-width="0.72" opacity="0.9"/>
<rect x="106.78" y="103.6" width="1.26" height="8.7" fill="#f23645"/>
<path d="M108.96 94.7V114.0" stroke="#089981" stroke-width="0.72" opacity="0.9"/>
<rect x="108.33" y="97.9" width="1.26" height="14.4" fill="#089981"/>
<path d="M110.50 94.7V112.4" stroke="#f23645" stroke-width="0.72" opacity="0.9"/>
<rect x="109.87" y="97.9" width="1.26" height="13.0" fill="#f23645"/>
<path d="M112.04 99.0V114.9" stroke="#089981" stroke-width="0.72" opacity="0.9"/>
<rect x="111.41" y="102.0" width="1.26" height="10.0" fill="#089981"/>
<path d="M113.58 106.8V162.0" stroke="#f23645" stroke-width="0.72" opacity="0.9"/>
<rect x="112.95" y="110.0" width="1.26" height="23.9" fill="#f23645"/>
<path d="M115.12 100.4V136.9" stroke="#089981" stroke-width="0.72" opacity="0.9"/>
<rect x="114.49" y="103.6" width="1.26" height="30.4" fill="#089981"/>
<path d="M116.66 89.9V104.7" stroke="#089981" stroke-width="0.72" opacity="0.9"/>
<rect x="116.03" y="97.1" width="1.26" height="6.5" fill="#089981"/>
<path d="M118.21 77.6V102.1" stroke="#f23645" stroke-width="0.72" opacity="0.9"/>
<rect x="117.58" y="97.0" width="1.26" height="4.0" fill="#f23645"/>
<path d="M119.75 67.9V105.4" stroke="#089981" stroke-width="0.72" opacity="0.9"/>
<rect x="119.12" y="71.1" width="1.26" height="31.1" fill="#089981"/>
<path d="M121.29 67.5V87.3" stroke="#f23645" stroke-width="0.72" opacity="0.9"/>
<rect x="120.66" y="71.1" width="1.26" height="13.0" fill="#f23645"/>
<path d="M122.83 57.4V87.3" stroke="#089981" stroke-width="0.72" opacity="0.9"/>
<rect x="122.20" y="62.4" width="1.26" height="21.7" fill="#089981"/>
<path d="M124.37 49.0V66.5" stroke="#f23645" stroke-width="0.72" opacity="0.9"/>
<rect x="123.74" y="62.4" width="1.26" height="3.6" fill="#f23645"/>
<path d="M125.91 58.5V80.8" stroke="#f23645" stroke-width="0.72" opacity="0.9"/>
<rect x="125.28" y="61.7" width="1.26" height="15.9" fill="#f23645"/>
<path d="M127.46 62.8V96.4" stroke="#f23645" stroke-width="0.72" opacity="0.9"/>
<rect x="126.83" y="66.0" width="1.26" height="17.4" fill="#f23645"/>
<path d="M129.00 73.7V106.8" stroke="#f23645" stroke-width="0.72" opacity="0.9"/>
<rect x="128.37" y="76.9" width="1.26" height="26.7" fill="#f23645"/>
<path d="M130.54 91.8V139.0" stroke="#089981" stroke-width="0.72" opacity="0.9"/>
<rect x="129.91" y="95.0" width="1.26" height="8.6" fill="#089981"/>
<path d="M132.08 78.3V115.5" stroke="#f23645" stroke-width="0.72" opacity="0.9"/>
<rect x="131.45" y="95.0" width="1.26" height="17.3" fill="#f23645"/>
<path d="M133.62 110.2V122.8" stroke="#f23645" stroke-width="0.72" opacity="0.9"/>
<rect x="132.99" y="112.3" width="1.26" height="7.7" fill="#f23645"/>
<path d="M135.16 101.2V130.0" stroke="#089981" stroke-width="0.72" opacity="0.9"/>
<rect x="134.53" y="104.4" width="1.26" height="15.6" fill="#089981"/>
<path d="M136.70 103.6V112.9" stroke="#089981" stroke-width="0.72" opacity="0.9"/>
<rect x="136.07" y="107.0" width="1.26" height="5.0" fill="#089981"/>
<path d="M138.25 104.1V122.7" stroke="#f23645" stroke-width="0.72" opacity="0.9"/>
<rect x="137.62" y="107.3" width="1.26" height="12.7" fill="#f23645"/>
<path d="M139.79 116.9V147.9" stroke="#f23645" stroke-width="0.72" opacity="0.9"/>
<rect x="139.16" y="120.1" width="1.26" height="24.6" fill="#f23645"/>
<path d="M141.33 143.9V146.0" stroke="#f23645" stroke-width="0.72" opacity="0.9"/>
<rect x="140.70" y="144.7" width="1.26" height="0.9" fill="#f23645"/>
<path d="M142.87 133.1V154.8" stroke="#089981" stroke-width="0.72" opacity="0.9"/>
<rect x="142.24" y="136.0" width="1.26" height="8.7" fill="#089981"/>
<path d="M144.41 135.0V147.9" stroke="#f23645" stroke-width="0.72" opacity="0.9"/>
<rect x="143.78" y="136.0" width="1.26" height="8.7" fill="#f23645"/>
<path d="M145.95 142.2V156.6" stroke="#f23645" stroke-width="0.72" opacity="0.9"/>
<rect x="145.32" y="144.7" width="1.26" height="8.7" fill="#f23645"/>
<path d="M147.50 151.7V161.9" stroke="#f23645" stroke-width="0.72" opacity="0.9"/>
<rect x="146.87" y="153.4" width="1.26" height="7.2" fill="#f23645"/>
<path d="M149.04 138.6V159.5" stroke="#089981" stroke-width="0.72" opacity="0.9"/>
<rect x="148.41" y="141.8" width="1.26" height="14.5" fill="#089981"/>
<path d="M150.58 128.5V146.2" stroke="#089981" stroke-width="0.72" opacity="0.9"/>
<rect x="149.95" y="131.7" width="1.26" height="10.1" fill="#089981"/>
<path d="M152.12 116.9V134.9" stroke="#089981" stroke-width="0.72" opacity="0.9"/>
<rect x="151.49" y="120.1" width="1.26" height="11.6" fill="#089981"/>
<path d="M153.66 116.5V129.3" stroke="#f23645" stroke-width="0.72" opacity="0.9"/>
<rect x="153.03" y="123.0" width="1.26" height="4.3" fill="#f23645"/>
<path d="M155.20 126.2V127.8" stroke="#089981" stroke-width="0.72" opacity="0.9"/>
<rect x="154.57" y="126.5" width="1.26" height="0.9" fill="#089981"/>
<path d="M156.75 126.2V133.7" stroke="#f23645" stroke-width="0.72" opacity="0.9"/>
<rect x="156.12" y="127.4" width="1.26" height="4.3" fill="#f23645"/>
<path d="M158.29 128.8V155.1" stroke="#f23645" stroke-width="0.72" opacity="0.9"/>
<rect x="157.66" y="131.7" width="1.26" height="20.2" fill="#f23645"/>
<path d="M159.83 149.2V162.4" stroke="#f23645" stroke-width="0.72" opacity="0.9"/>
<rect x="159.20" y="151.9" width="1.26" height="7.2" fill="#f23645"/>
<path d="M161.37 157.4V180.5" stroke="#f23645" stroke-width="0.72" opacity="0.9"/>
<rect x="160.74" y="160.6" width="1.26" height="16.6" fill="#f23645"/>
<path d="M162.91 156.3V177.3" stroke="#089981" stroke-width="0.72" opacity="0.9"/>
<rect x="162.28" y="160.6" width="1.26" height="7.2" fill="#089981"/>
<path d="M164.45 166.4V180.2" stroke="#f23645" stroke-width="0.72" opacity="0.9"/>
<rect x="163.82" y="167.9" width="1.26" height="9.4" fill="#f23645"/>
<path d="M166.00 172.7V179.0" stroke="#089981" stroke-width="0.72" opacity="0.9"/>
<rect x="165.37" y="173.6" width="1.26" height="3.6" fill="#089981"/>
<path d="M167.54 172.0V178.2" stroke="#f23645" stroke-width="0.72" opacity="0.9"/>
<rect x="166.91" y="173.6" width="1.26" height="3.6" fill="#f23645"/>
<path d="M169.08 171.6V190.0" stroke="#089981" stroke-width="0.72" opacity="0.9"/>
<rect x="168.45" y="173.6" width="1.26" height="3.6" fill="#089981"/>
<path d="M170.62 163.6V178.7" stroke="#089981" stroke-width="0.72" opacity="0.9"/>
<rect x="169.99" y="165.0" width="1.26" height="12.3" fill="#089981"/>
<path d="M172.16 162.8V165.5" stroke="#089981" stroke-width="0.72" opacity="0.9"/>
<rect x="171.53" y="163.5" width="1.26" height="1.4" fill="#089981"/>
<path d="M173.70 162.9V165.3" stroke="#f23645" stroke-width="0.72" opacity="0.9"/>
<rect x="173.07" y="163.5" width="1.26" height="0.9" fill="#f23645"/>
<path d="M175.24 161.1V179.4" stroke="#f23645" stroke-width="0.72" opacity="0.9"/>
<rect x="174.61" y="163.5" width="1.26" height="7.2" fill="#f23645"/>
<path d="M176.79 128.8V165.8" stroke="#089981" stroke-width="0.72" opacity="0.9"/>
<rect x="176.16" y="154.8" width="1.26" height="10.1" fill="#089981"/>
<path d="M178.33 136.8V168.2" stroke="#f23645" stroke-width="0.72" opacity="0.9"/>
<rect x="177.70" y="154.8" width="1.26" height="10.1" fill="#f23645"/>
<path d="M179.87 151.0V170.7" stroke="#089981" stroke-width="0.72" opacity="0.9"/>
<rect x="179.24" y="153.4" width="1.26" height="11.6" fill="#089981"/>
<path d="M181.41 152.5V155.9" stroke="#f23645" stroke-width="0.72" opacity="0.9"/>
<rect x="180.78" y="153.4" width="1.26" height="1.4" fill="#f23645"/>
<path d="M182.95 153.6V167.3" stroke="#f23645" stroke-width="0.72" opacity="0.9"/>
<rect x="182.32" y="154.8" width="1.26" height="10.1" fill="#f23645"/>
<path d="M184.49 131.7V160.0" stroke="#089981" stroke-width="0.72" opacity="0.9"/>
<rect x="183.86" y="151.9" width="1.26" height="5.8" fill="#089981"/>
<path d="M186.04 145.2V154.6" stroke="#089981" stroke-width="0.72" opacity="0.9"/>
<rect x="185.41" y="146.2" width="1.26" height="5.8" fill="#089981"/>
<path d="M187.58 136.0V153.5" stroke="#f23645" stroke-width="0.72" opacity="0.9"/>
<rect x="186.95" y="146.2" width="1.26" height="5.8" fill="#f23645"/>
<path d="M189.12 149.5V167.9" stroke="#f23645" stroke-width="0.72" opacity="0.9"/>
<rect x="188.49" y="151.9" width="1.26" height="7.2" fill="#f23645"/>
<path d="M190.66 158.1V160.2" stroke="#089981" stroke-width="0.72" opacity="0.9"/>
<rect x="190.03" y="158.3" width="1.26" height="0.9" fill="#089981"/>
<path d="M192.20 138.6V162.4" stroke="#089981" stroke-width="0.72" opacity="0.9"/>
<rect x="191.57" y="141.8" width="1.26" height="17.4" fill="#089981"/>
<path d="M193.74 117.2V145.0" stroke="#089981" stroke-width="0.72" opacity="0.9"/>
<rect x="193.11" y="127.4" width="1.26" height="14.5" fill="#089981"/>
<path d="M195.29 123.0V138.6" stroke="#f23645" stroke-width="0.72" opacity="0.9"/>
<rect x="194.66" y="127.4" width="1.26" height="10.1" fill="#f23645"/>
<path d="M196.83 134.7V162.4" stroke="#f23645" stroke-width="0.72" opacity="0.9"/>
<rect x="196.20" y="137.5" width="1.26" height="21.7" fill="#f23645"/>
<path d="M198.37 156.5V179.3" stroke="#f23645" stroke-width="0.72" opacity="0.9"/>
<rect x="197.74" y="157.6" width="1.26" height="12.3" fill="#f23645"/>
<path d="M199.91 145.7V217.3" stroke="#089981" stroke-width="0.72" opacity="0.9"/>
<rect x="199.28" y="148.9" width="1.26" height="21.0" fill="#089981"/>
<path d="M201.45 135.9V158.1" stroke="#f23645" stroke-width="0.72" opacity="0.9"/>
<rect x="200.82" y="148.9" width="1.26" height="7.2" fill="#f23645"/>
<path d="M202.99 140.2V166.6" stroke="#f23645" stroke-width="0.72" opacity="0.9"/>
<rect x="202.36" y="148.9" width="1.26" height="14.5" fill="#f23645"/>
<path d="M204.54 147.2V166.6" stroke="#089981" stroke-width="0.72" opacity="0.9"/>
<rect x="203.91" y="150.4" width="1.26" height="13.0" fill="#089981"/>
<path d="M206.08 137.4V158.5" stroke="#089981" stroke-width="0.72" opacity="0.9"/>
<rect x="205.45" y="147.5" width="1.26" height="8.7" fill="#089981"/>
<path d="M207.62 144.3V158.2" stroke="#f23645" stroke-width="0.72" opacity="0.9"/>
<rect x="206.99" y="147.5" width="1.26" height="9.4" fill="#f23645"/>
<path d="M209.16 152.0V157.3" stroke="#089981" stroke-width="0.72" opacity="0.9"/>
<rect x="208.53" y="153.3" width="1.26" height="3.6" fill="#089981"/>
<path d="M210.70 150.5V164.1" stroke="#f23645" stroke-width="0.72" opacity="0.9"/>
<rect x="210.07" y="153.3" width="1.26" height="6.5" fill="#f23645"/>
<path d="M212.24 143.9V163.0" stroke="#089981" stroke-width="0.72" opacity="0.9"/>
<rect x="211.61" y="151.1" width="1.26" height="8.7" fill="#089981"/>
<path d="M213.78 148.5V163.0" stroke="#089981" stroke-width="0.72" opacity="0.9"/>
<rect x="213.15" y="149.6" width="1.26" height="10.1" fill="#089981"/>
<path d="M215.33 148.4V162.3" stroke="#f23645" stroke-width="0.72" opacity="0.9"/>
<rect x="214.70" y="149.6" width="1.26" height="9.4" fill="#f23645"/>
<path d="M216.87 158.6V162.6" stroke="#f23645" stroke-width="0.72" opacity="0.9"/>
<rect x="216.24" y="159.1" width="1.26" height="2.2" fill="#f23645"/>
<path d="M218.41 160.7V169.9" stroke="#f23645" stroke-width="0.72" opacity="0.9"/>
<rect x="217.78" y="161.2" width="1.26" height="5.1" fill="#f23645"/>
<path d="M219.95 162.4V170.9" stroke="#f23645" stroke-width="0.72" opacity="0.9"/>
<rect x="219.32" y="163.4" width="1.26" height="5.8" fill="#f23645"/>
<path d="M221.49 164.5V186.5" stroke="#f23645" stroke-width="0.72" opacity="0.9"/>
<rect x="220.86" y="167.7" width="1.26" height="8.7" fill="#f23645"/>
<path d="M223.03 172.7V177.5" stroke="#089981" stroke-width="0.72" opacity="0.9"/>
<rect x="222.40" y="173.5" width="1.26" height="2.9" fill="#089981"/>
<path d="M224.58 171.7V177.6" stroke="#f23645" stroke-width="0.72" opacity="0.9"/>
<rect x="223.95" y="173.5" width="1.26" height="3.6" fill="#f23645"/>
<path d="M226.12 167.1V180.3" stroke="#089981" stroke-width="0.72" opacity="0.9"/>
<rect x="225.49" y="169.9" width="1.26" height="7.2" fill="#089981"/>
<path d="M227.66 171.8V192.4" stroke="#f23645" stroke-width="0.72" opacity="0.9"/>
<rect x="227.03" y="175.0" width="1.26" height="13.7" fill="#f23645"/>
<path d="M229.20 179.5V190.7" stroke="#089981" stroke-width="0.72" opacity="0.9"/>
<rect x="228.57" y="182.2" width="1.26" height="6.5" fill="#089981"/>
<path d="M230.74 179.7V190.7" stroke="#f23645" stroke-width="0.72" opacity="0.9"/>
<rect x="230.11" y="182.2" width="1.26" height="5.8" fill="#f23645"/>
<path d="M232.28 184.1V209.4" stroke="#f23645" stroke-width="0.72" opacity="0.9"/>
<rect x="231.65" y="186.6" width="1.26" height="20.2" fill="#f23645"/>
<path d="M233.83 202.9V216.9" stroke="#089981" stroke-width="0.72" opacity="0.9"/>
<rect x="233.20" y="203.9" width="1.26" height="2.9" fill="#089981"/>
<path d="M235.37 201.4V204.9" stroke="#089981" stroke-width="0.72" opacity="0.9"/>
<rect x="234.74" y="202.5" width="1.26" height="1.4" fill="#089981"/>
<path d="M236.91 200.3V211.6" stroke="#f23645" stroke-width="0.72" opacity="0.9"/>
<rect x="236.28" y="202.5" width="1.26" height="6.5" fill="#f23645"/>
<path d="M238.45 201.4V218.4" stroke="#089981" stroke-width="0.72" opacity="0.9"/>
<rect x="237.82" y="202.5" width="1.26" height="7.2" fill="#089981"/>
<path d="M239.99 197.9V207.6" stroke="#089981" stroke-width="0.72" opacity="0.9"/>
<rect x="239.36" y="198.9" width="1.26" height="6.5" fill="#089981"/>
<path d="M241.53 175.0V201.4" stroke="#089981" stroke-width="0.72" opacity="0.9"/>
<rect x="240.90" y="177.2" width="1.26" height="21.7" fill="#089981"/>
<path d="M243.08 174.5V209.3" stroke="#f23645" stroke-width="0.72" opacity="0.9"/>
<rect x="242.45" y="177.2" width="1.26" height="28.9" fill="#f23645"/>
<path d="M244.62 204.8V222.0" stroke="#f23645" stroke-width="0.72" opacity="0.9"/>
<rect x="243.99" y="206.1" width="1.26" height="3.6" fill="#f23645"/>
<path d="M246.16 181.9V212.9" stroke="#089981" stroke-width="0.72" opacity="0.9"/>
<rect x="245.53" y="185.1" width="1.26" height="24.6" fill="#089981"/>
<path d="M247.70 176.4V197.5" stroke="#f23645" stroke-width="0.72" opacity="0.9"/>
<rect x="247.07" y="188.0" width="1.26" height="6.5" fill="#f23645"/>
<path d="M249.24 193.2V210.3" stroke="#f23645" stroke-width="0.72" opacity="0.9"/>
<rect x="248.61" y="194.5" width="1.26" height="13.7" fill="#f23645"/>
<path d="M250.78 206.2V214.1" stroke="#f23645" stroke-width="0.72" opacity="0.9"/>
<rect x="250.15" y="206.8" width="1.26" height="6.5" fill="#f23645"/>
<path d="M252.32 210.4V225.9" stroke="#f23645" stroke-width="0.72" opacity="0.9"/>
<rect x="251.69" y="213.3" width="1.26" height="11.6" fill="#f23645"/>
<path d="M253.87 221.7V235.3" stroke="#f23645" stroke-width="0.72" opacity="0.9"/>
<rect x="253.24" y="224.9" width="1.26" height="9.4" fill="#f23645"/>
<path d="M255.41 227.2V240.1" stroke="#089981" stroke-width="0.72" opacity="0.9"/>
<rect x="254.78" y="228.5" width="1.26" height="5.8" fill="#089981"/>
<path d="M256.95 215.2V231.7" stroke="#089981" stroke-width="0.72" opacity="0.9"/>
<rect x="256.32" y="218.4" width="1.26" height="10.1" fill="#089981"/>
<path d="M258.49 218.5V230.2" stroke="#f23645" stroke-width="0.72" opacity="0.9"/>
<rect x="257.86" y="219.8" width="1.26" height="8.7" fill="#f23645"/>
<path d="M260.03 216.5V231.7" stroke="#089981" stroke-width="0.72" opacity="0.9"/>
<rect x="259.40" y="219.1" width="1.26" height="9.4" fill="#089981"/>
<path d="M261.57 219.0V230.7" stroke="#f23645" stroke-width="0.72" opacity="0.9"/>
<rect x="260.94" y="221.3" width="1.26" height="8.0" fill="#f23645"/>
<path d="M263.12 227.8V230.2" stroke="#089981" stroke-width="0.72" opacity="0.9"/>
<rect x="262.49" y="228.4" width="1.26" height="0.9" fill="#089981"/>
<path d="M264.66 216.6V232.4" stroke="#089981" stroke-width="0.72" opacity="0.9"/>
<rect x="264.03" y="219.8" width="1.26" height="9.4" fill="#089981"/>
<path d="M266.20 216.6V230.7" stroke="#f23645" stroke-width="0.72" opacity="0.9"/>
<rect x="265.57" y="219.8" width="1.26" height="9.4" fill="#f23645"/>
<path d="M267.74 217.9V228.9" stroke="#089981" stroke-width="0.72" opacity="0.9"/>
<rect x="267.11" y="219.8" width="1.26" height="7.2" fill="#089981"/>
<path d="M269.28 217.5V227.0" stroke="#f23645" stroke-width="0.72" opacity="0.9"/>
<rect x="268.65" y="219.1" width="1.26" height="6.5" fill="#f23645"/>
<path d="M270.82 224.5V228.6" stroke="#f23645" stroke-width="0.72" opacity="0.9"/>
<rect x="270.19" y="225.6" width="1.26" height="2.2" fill="#f23645"/>
<path d="M272.37 225.1V228.4" stroke="#089981" stroke-width="0.72" opacity="0.9"/>
<rect x="271.74" y="225.6" width="1.26" height="2.2" fill="#089981"/>
<path d="M273.91 222.2V227.1" stroke="#089981" stroke-width="0.72" opacity="0.9"/>
<rect x="273.28" y="222.7" width="1.26" height="2.9" fill="#089981"/>
<path d="M275.45 210.9V225.6" stroke="#089981" stroke-width="0.72" opacity="0.9"/>
<rect x="274.82" y="214.1" width="1.26" height="8.7" fill="#089981"/>
<path d="M276.99 209.7V214.8" stroke="#089981" stroke-width="0.72" opacity="0.9"/>
<rect x="276.36" y="211.9" width="1.26" height="2.2" fill="#089981"/>
<path d="M278.53 210.6V219.3" stroke="#f23645" stroke-width="0.72" opacity="0.9"/>
<rect x="277.90" y="211.9" width="1.26" height="6.5" fill="#f23645"/>
<path d="M280.07 214.5V219.8" stroke="#089981" stroke-width="0.72" opacity="0.9"/>
<rect x="279.44" y="215.5" width="1.26" height="2.9" fill="#089981"/>
<path d="M281.62 214.3V228.8" stroke="#f23645" stroke-width="0.72" opacity="0.9"/>
<rect x="280.99" y="215.5" width="1.26" height="10.1" fill="#f23645"/>
<path d="M283.16 224.6V234.5" stroke="#f23645" stroke-width="0.72" opacity="0.9"/>
<rect x="282.53" y="225.6" width="1.26" height="6.5" fill="#f23645"/>
<path d="M284.70 229.2V235.2" stroke="#f23645" stroke-width="0.72" opacity="0.9"/>
<rect x="284.07" y="230.0" width="1.26" height="3.6" fill="#f23645"/>
<path d="M286.24 231.6V237.9" stroke="#f23645" stroke-width="0.72" opacity="0.9"/>
<rect x="285.61" y="232.9" width="1.26" height="1.4" fill="#f23645"/>
<path d="M287.78 227.0V235.8" stroke="#089981" stroke-width="0.72" opacity="0.9"/>
<rect x="287.15" y="228.5" width="1.26" height="5.8" fill="#089981"/>
<path d="M289.32 219.1V234.8" stroke="#f23645" stroke-width="0.72" opacity="0.9"/>
<rect x="288.69" y="228.5" width="1.26" height="5.1" fill="#f23645"/>
<path d="M290.86 227.9V234.0" stroke="#089981" stroke-width="0.72" opacity="0.9"/>
<rect x="290.23" y="228.5" width="1.26" height="4.3" fill="#089981"/>
<path d="M292.41 227.3V229.1" stroke="#089981" stroke-width="0.72" opacity="0.9"/>
<rect x="291.78" y="227.7" width="1.26" height="0.9" fill="#089981"/>
<path d="M293.95 226.4V231.6" stroke="#f23645" stroke-width="0.72" opacity="0.9"/>
<rect x="293.32" y="227.8" width="1.26" height="2.9" fill="#f23645"/>
<path d="M295.49 226.0V243.8" stroke="#f23645" stroke-width="0.72" opacity="0.9"/>
<rect x="294.86" y="229.2" width="1.26" height="12.3" fill="#f23645"/>
<path d="M297.03 230.0V249.5" stroke="#089981" stroke-width="0.72" opacity="0.9"/>
<rect x="296.40" y="237.2" width="1.26" height="4.3" fill="#089981"/>
<path d="M298.57 234.0V244.6" stroke="#f23645" stroke-width="0.72" opacity="0.9"/>
<rect x="297.94" y="237.2" width="1.26" height="6.5" fill="#f23645"/>
<path d="M300.11 218.4V246.6" stroke="#089981" stroke-width="0.72" opacity="0.9"/>
<rect x="299.48" y="224.2" width="1.26" height="19.5" fill="#089981"/>
<path d="M301.66 221.1V231.9" stroke="#f23645" stroke-width="0.72" opacity="0.9"/>
<rect x="301.03" y="224.2" width="1.26" height="6.5" fill="#f23645"/>
<path d="M303.20 210.9V231.6" stroke="#089981" stroke-width="0.72" opacity="0.9"/>
<rect x="302.57" y="214.1" width="1.26" height="15.9" fill="#089981"/>
<path d="M304.74 216.5V218.7" stroke="#f23645" stroke-width="0.72" opacity="0.9"/>
<rect x="304.11" y="216.9" width="1.26" height="0.9" fill="#f23645"/>
<path d="M306.28 213.4V227.4" stroke="#f23645" stroke-width="0.72" opacity="0.9"/>
<rect x="305.65" y="214.8" width="1.26" height="9.4" fill="#f23645"/>
<path d="M307.82 219.8V225.8" stroke="#089981" stroke-width="0.72" opacity="0.9"/>
<rect x="307.19" y="221.3" width="1.26" height="2.9" fill="#089981"/>
<path d="M309.36 216.7V228.7" stroke="#f23645" stroke-width="0.72" opacity="0.9"/>
<rect x="308.73" y="219.1" width="1.26" height="6.5" fill="#f23645"/>
<path d="M310.91 224.4V231.4" stroke="#f23645" stroke-width="0.72" opacity="0.9"/>
<rect x="310.28" y="225.6" width="1.26" height="4.3" fill="#f23645"/>
<path d="M312.45 227.8V230.7" stroke="#089981" stroke-width="0.72" opacity="0.9"/>
<rect x="311.82" y="228.5" width="1.26" height="1.4" fill="#089981"/>
<path d="M313.99 225.7V229.1" stroke="#089981" stroke-width="0.72" opacity="0.9"/>
<rect x="313.36" y="226.3" width="1.26" height="2.2" fill="#089981"/>
<path d="M315.53 223.9V226.7" stroke="#089981" stroke-width="0.72" opacity="0.9"/>
<rect x="314.90" y="224.9" width="1.26" height="1.4" fill="#089981"/>
<path d="M317.07 221.5V227.9" stroke="#f23645" stroke-width="0.72" opacity="0.9"/>
<rect x="316.44" y="223.5" width="1.26" height="3.6" fill="#f23645"/>
<path d="M318.61 220.8V227.0" stroke="#089981" stroke-width="0.72" opacity="0.9"/>
<rect x="317.98" y="221.3" width="1.26" height="5.1" fill="#089981"/>
<path d="M320.16 213.5V223.5" stroke="#089981" stroke-width="0.72" opacity="0.9"/>
<rect x="319.53" y="214.8" width="1.26" height="6.5" fill="#089981"/>
<path d="M321.70 206.2V217.0" stroke="#089981" stroke-width="0.72" opacity="0.9"/>
<rect x="321.07" y="207.5" width="1.26" height="8.0" fill="#089981"/>
<path d="M323.24 197.4V222.0" stroke="#089981" stroke-width="0.72" opacity="0.9"/>
<rect x="322.61" y="204.6" width="1.26" height="2.9" fill="#089981"/>
<path d="M324.78 204.3V205.6" stroke="#f23645" stroke-width="0.72" opacity="0.9"/>
<rect x="324.15" y="204.6" width="1.26" height="0.9" fill="#f23645"/>
<path d="M326.32 197.4V206.9" stroke="#089981" stroke-width="0.72" opacity="0.9"/>
<rect x="325.69" y="203.2" width="1.26" height="2.2" fill="#089981"/>
<path d="M327.86 201.9V215.1" stroke="#f23645" stroke-width="0.72" opacity="0.9"/>
<rect x="327.23" y="203.9" width="1.26" height="8.0" fill="#f23645"/>
<path d="M329.40 203.3V211.8" stroke="#089981" stroke-width="0.72" opacity="0.9"/>
<rect x="328.77" y="205.4" width="1.26" height="5.8" fill="#089981"/>
<path d="M330.95 203.2V217.3" stroke="#f23645" stroke-width="0.72" opacity="0.9"/>
<rect x="330.32" y="206.1" width="1.26" height="8.0" fill="#f23645"/>
<path d="M332.49 212.6V221.3" stroke="#f23645" stroke-width="0.72" opacity="0.9"/>
<rect x="331.86" y="214.1" width="1.26" height="2.2" fill="#f23645"/>
<path d="M334.03 212.6V216.8" stroke="#089981" stroke-width="0.72" opacity="0.9"/>
<rect x="333.40" y="213.3" width="1.26" height="2.9" fill="#089981"/>
<path d="M335.57 212.3V214.8" stroke="#f23645" stroke-width="0.72" opacity="0.9"/>
<rect x="334.94" y="213.2" width="1.26" height="0.9" fill="#f23645"/>
<path d="M337.11 212.2V220.8" stroke="#f23645" stroke-width="0.72" opacity="0.9"/>
<rect x="336.48" y="214.1" width="1.26" height="5.8" fill="#f23645"/>
<path d="M338.65 218.9V224.0" stroke="#f23645" stroke-width="0.72" opacity="0.9"/>
<rect x="338.02" y="219.8" width="1.26" height="2.9" fill="#f23645"/>
<path d="M340.20 220.7V224.7" stroke="#f23645" stroke-width="0.72" opacity="0.9"/>
<rect x="339.57" y="221.3" width="1.26" height="2.2" fill="#f23645"/>
<path d="M341.74 219.2V225.3" stroke="#089981" stroke-width="0.72" opacity="0.9"/>
<rect x="341.11" y="221.3" width="1.26" height="3.6" fill="#089981"/>
<path d="M343.28 206.4V225.2" stroke="#089981" stroke-width="0.72" opacity="0.9"/>
<rect x="342.65" y="207.5" width="1.26" height="14.5" fill="#089981"/>
<path d="M344.82 205.7V208.2" stroke="#089981" stroke-width="0.72" opacity="0.9"/>
<rect x="344.19" y="206.7" width="1.26" height="0.9" fill="#089981"/>
<path d="M346.36 194.8V210.3" stroke="#089981" stroke-width="0.72" opacity="0.9"/>
<rect x="345.73" y="196.7" width="1.26" height="10.8" fill="#089981"/>
<path d="M347.90 186.9V199.2" stroke="#089981" stroke-width="0.72" opacity="0.9"/>
<rect x="347.27" y="189.5" width="1.26" height="7.2" fill="#089981"/>
<path d="M349.45 186.3V205.7" stroke="#f23645" stroke-width="0.72" opacity="0.9"/>
<rect x="348.82" y="189.5" width="1.26" height="13.0" fill="#f23645"/>
<path d="M350.99 195.0V207.5" stroke="#089981" stroke-width="0.72" opacity="0.9"/>
<rect x="350.36" y="197.4" width="1.26" height="5.1" fill="#089981"/>
<path d="M352.53 191.8V198.3" stroke="#089981" stroke-width="0.72" opacity="0.9"/>
<rect x="351.90" y="193.8" width="1.26" height="3.6" fill="#089981"/>
<path d="M354.07 185.1V202.3" stroke="#f23645" stroke-width="0.72" opacity="0.9"/>
<rect x="353.44" y="193.8" width="1.26" height="7.2" fill="#f23645"/>
<path d="M355.61 198.2V208.8" stroke="#f23645" stroke-width="0.72" opacity="0.9"/>
<rect x="354.98" y="199.6" width="1.26" height="8.0" fill="#f23645"/>
<path d="M357.15 203.9V215.9" stroke="#f23645" stroke-width="0.72" opacity="0.9"/>
<rect x="356.52" y="206.8" width="1.26" height="6.5" fill="#f23645"/>
<path d="M358.70 210.4V218.9" stroke="#f23645" stroke-width="0.72" opacity="0.9"/>
<rect x="358.07" y="211.2" width="1.26" height="5.1" fill="#f23645"/>
<path d="M360.24 205.8V219.3" stroke="#089981" stroke-width="0.72" opacity="0.9"/>
<rect x="359.61" y="209.0" width="1.26" height="7.2" fill="#089981"/>
<path d="M361.78 208.4V219.8" stroke="#f23645" stroke-width="0.72" opacity="0.9"/>
<rect x="361.15" y="209.0" width="1.26" height="7.2" fill="#f23645"/>
<path d="M363.32 203.4V217.3" stroke="#089981" stroke-width="0.72" opacity="0.9"/>
<rect x="362.69" y="206.1" width="1.26" height="8.0" fill="#089981"/>
<path d="M364.86 205.5V207.1" stroke="#f23645" stroke-width="0.72" opacity="0.9"/>
<rect x="364.23" y="206.0" width="1.26" height="0.9" fill="#f23645"/>
<path d="M366.40 198.9V208.3" stroke="#089981" stroke-width="0.72" opacity="0.9"/>
<rect x="365.77" y="201.0" width="1.26" height="5.8" fill="#089981"/>
<path d="M367.94 196.7V216.5" stroke="#f23645" stroke-width="0.72" opacity="0.9"/>
<rect x="367.31" y="201.0" width="1.26" height="12.3" fill="#f23645"/>
<path d="M369.49 207.7V214.7" stroke="#089981" stroke-width="0.72" opacity="0.9"/>
<rect x="368.86" y="209.7" width="1.26" height="3.6" fill="#089981"/>
<path d="M371.03 208.2V213.8" stroke="#f23645" stroke-width="0.72" opacity="0.9"/>
<rect x="370.40" y="209.7" width="1.26" height="3.6" fill="#f23645"/>
<path d="M372.57 209.0V214.1" stroke="#089981" stroke-width="0.72" opacity="0.9"/>
<rect x="371.94" y="209.7" width="1.26" height="3.6" fill="#089981"/>
<path d="M374.11 209.5V211.0" stroke="#f23645" stroke-width="0.72" opacity="0.9"/>
<rect x="373.48" y="209.7" width="1.26" height="0.9" fill="#f23645"/>
<path d="M375.65 208.7V216.4" stroke="#f23645" stroke-width="0.72" opacity="0.9"/>
<rect x="375.02" y="209.7" width="1.26" height="4.3" fill="#f23645"/>
<path d="M377.19 213.1V218.1" stroke="#f23645" stroke-width="0.72" opacity="0.9"/>
<rect x="376.56" y="214.1" width="1.26" height="3.6" fill="#f23645"/>
<path d="M378.74 213.7V231.2" stroke="#f23645" stroke-width="0.72" opacity="0.9"/>
<rect x="378.11" y="216.9" width="1.26" height="12.3" fill="#f23645"/>
<path d="M380.28 225.0V232.9" stroke="#089981" stroke-width="0.72" opacity="0.9"/>
<rect x="379.65" y="225.6" width="1.26" height="3.6" fill="#089981"/>
<path d="M381.82 225.1V226.7" stroke="#f23645" stroke-width="0.72" opacity="0.9"/>
<rect x="381.19" y="225.5" width="1.26" height="0.9" fill="#f23645"/>
<path d="M383.36 223.6V227.4" stroke="#089981" stroke-width="0.72" opacity="0.9"/>
<rect x="382.73" y="224.2" width="1.26" height="2.2" fill="#089981"/>
<path d="M384.90 222.2V226.1" stroke="#f23645" stroke-width="0.72" opacity="0.9"/>
<rect x="384.27" y="222.7" width="1.26" height="2.2" fill="#f23645"/>
<path d="M386.44 223.6V230.5" stroke="#f23645" stroke-width="0.72" opacity="0.9"/>
<rect x="385.81" y="224.2" width="1.26" height="4.3" fill="#f23645"/>
<path d="M387.99 227.6V236.5" stroke="#f23645" stroke-width="0.72" opacity="0.9"/>
<rect x="387.36" y="228.5" width="1.26" height="6.5" fill="#f23645"/>
<path d="M389.53 222.7V237.2" stroke="#089981" stroke-width="0.72" opacity="0.9"/>
<rect x="388.90" y="225.6" width="1.26" height="9.4" fill="#089981"/>
<path d="M391.07 225.0V228.8" stroke="#f23645" stroke-width="0.72" opacity="0.9"/>
<rect x="390.44" y="225.6" width="1.26" height="2.2" fill="#f23645"/>
<path d="M392.61 226.7V228.8" stroke="#089981" stroke-width="0.72" opacity="0.9"/>
<rect x="391.98" y="226.9" width="1.26" height="0.9" fill="#089981"/>
<path d="M394.15 218.4V228.8" stroke="#089981" stroke-width="0.72" opacity="0.9"/>
<rect x="393.52" y="221.3" width="1.26" height="6.5" fill="#089981"/>
<path d="M395.69 215.5V224.0" stroke="#089981" stroke-width="0.72" opacity="0.9"/>
<rect x="395.06" y="217.7" width="1.26" height="4.3" fill="#089981"/>
<path d="M397.24 214.1V223.8" stroke="#f23645" stroke-width="0.72" opacity="0.9"/>
<rect x="396.61" y="216.9" width="1.26" height="5.1" fill="#f23645"/>
<path d="M398.78 219.1V232.0" stroke="#f23645" stroke-width="0.72" opacity="0.9"/>
<rect x="398.15" y="222.0" width="1.26" height="7.2" fill="#f23645"/>
<path d="M400.32 227.9V237.2" stroke="#f23645" stroke-width="0.72" opacity="0.9"/>
<rect x="399.69" y="229.2" width="1.26" height="4.3" fill="#f23645"/>
<path d="M401.86 230.8V234.6" stroke="#089981" stroke-width="0.72" opacity="0.9"/>
<rect x="401.23" y="231.4" width="1.26" height="2.2" fill="#089981"/>
<path d="M403.40 230.3V232.3" stroke="#089981" stroke-width="0.72" opacity="0.9"/>
<rect x="402.77" y="230.6" width="1.26" height="0.9" fill="#089981"/>
<path d="M404.94 224.9V233.8" stroke="#f23645" stroke-width="0.72" opacity="0.9"/>
<rect x="404.31" y="231.4" width="1.26" height="1.4" fill="#f23645"/>
<path d="M406.48 230.2V240.4" stroke="#f23645" stroke-width="0.72" opacity="0.9"/>
<rect x="405.85" y="232.1" width="1.26" height="6.5" fill="#f23645"/>
<path d="M408.03 230.6V240.8" stroke="#089981" stroke-width="0.72" opacity="0.9"/>
<rect x="407.40" y="232.9" width="1.26" height="5.8" fill="#089981"/>
<path d="M409.57 231.5V239.4" stroke="#f23645" stroke-width="0.72" opacity="0.9"/>
<rect x="408.94" y="232.9" width="1.26" height="4.3" fill="#f23645"/>
<path d="M411.11 233.6V242.5" stroke="#f23645" stroke-width="0.72" opacity="0.9"/>
<rect x="410.48" y="235.7" width="1.26" height="5.1" fill="#f23645"/>
<path d="M412.65 238.5V246.4" stroke="#f23645" stroke-width="0.72" opacity="0.9"/>
<rect x="412.02" y="240.8" width="1.26" height="5.1" fill="#f23645"/>
<path d="M414.19 243.4V255.0" stroke="#f23645" stroke-width="0.72" opacity="0.9"/>
<rect x="413.56" y="245.1" width="1.26" height="4.3" fill="#f23645"/>
<path d="M415.73 231.8V252.7" stroke="#089981" stroke-width="0.72" opacity="0.9"/>
<rect x="415.10" y="235.0" width="1.26" height="14.5" fill="#089981"/>
<path d="M417.28 231.1V237.0" stroke="#089981" stroke-width="0.72" opacity="0.9"/>
<rect x="416.65" y="232.9" width="1.26" height="2.9" fill="#089981"/>
<path d="M418.82 232.3V237.7" stroke="#f23645" stroke-width="0.72" opacity="0.9"/>
<rect x="418.19" y="232.9" width="1.26" height="4.3" fill="#f23645"/>
<path d="M420.36 235.2V241.1" stroke="#f23645" stroke-width="0.72" opacity="0.9"/>
<rect x="419.73" y="236.5" width="1.26" height="2.9" fill="#f23645"/>
<path d="M421.90 236.3V241.1" stroke="#089981" stroke-width="0.72" opacity="0.9"/>
<rect x="421.27" y="237.2" width="1.26" height="2.9" fill="#089981"/>
<path d="M423.44 233.1V237.6" stroke="#089981" stroke-width="0.72" opacity="0.9"/>
<rect x="422.81" y="233.6" width="1.26" height="3.6" fill="#089981"/>
<path d="M424.98 232.1V234.0" stroke="#089981" stroke-width="0.72" opacity="0.9"/>
<rect x="424.35" y="232.7" width="1.26" height="0.9" fill="#089981"/>
<path d="M426.53 230.8V234.4" stroke="#089981" stroke-width="0.72" opacity="0.9"/>
<rect x="425.90" y="231.4" width="1.26" height="2.2" fill="#089981"/>
<path d="M428.07 231.3V242.6" stroke="#f23645" stroke-width="0.72" opacity="0.9"/>
<rect x="427.44" y="232.1" width="1.26" height="7.2" fill="#f23645"/>
<path d="M429.61 230.9V240.1" stroke="#089981" stroke-width="0.72" opacity="0.9"/>
<rect x="428.98" y="233.6" width="1.26" height="5.8" fill="#089981"/>
<path d="M431.15 228.7V235.2" stroke="#089981" stroke-width="0.72" opacity="0.9"/>
<rect x="430.52" y="230.0" width="1.26" height="3.6" fill="#089981"/>
<path d="M432.69 229.5V236.1" stroke="#f23645" stroke-width="0.72" opacity="0.9"/>
<rect x="432.06" y="230.7" width="1.26" height="3.6" fill="#f23645"/>
<path d="M434.23 230.8V234.8" stroke="#089981" stroke-width="0.72" opacity="0.9"/>
<rect x="433.60" y="232.1" width="1.26" height="2.2" fill="#089981"/>
<path d="M435.78 228.8V232.7" stroke="#089981" stroke-width="0.72" opacity="0.9"/>
<rect x="435.15" y="230.0" width="1.26" height="2.2" fill="#089981"/>
<path d="M437.32 227.3V235.8" stroke="#f23645" stroke-width="0.72" opacity="0.9"/>
<rect x="436.69" y="229.2" width="1.26" height="5.1" fill="#f23645"/>
<path d="M438.86 232.6V234.6" stroke="#089981" stroke-width="0.72" opacity="0.9"/>
<rect x="438.23" y="233.4" width="1.26" height="0.9" fill="#089981"/>
<path d="M440.40 223.1V235.9" stroke="#089981" stroke-width="0.72" opacity="0.9"/>
<rect x="439.77" y="226.3" width="1.26" height="8.0" fill="#089981"/>
<path d="M441.94 216.8V230.1" stroke="#089981" stroke-width="0.72" opacity="0.9"/>
<rect x="441.31" y="217.7" width="1.26" height="9.4" fill="#089981"/>
<path d="M443.48 211.9V222.1" stroke="#f23645" stroke-width="0.72" opacity="0.9"/>
<rect x="442.85" y="216.9" width="1.26" height="4.3" fill="#f23645"/>
<path d="M445.02 216.8V223.8" stroke="#f23645" stroke-width="0.72" opacity="0.9"/>
<rect x="444.39" y="218.4" width="1.26" height="4.3" fill="#f23645"/>
<path d="M446.57 212.5V223.7" stroke="#089981" stroke-width="0.72" opacity="0.9"/>
<rect x="445.94" y="214.8" width="1.26" height="6.5" fill="#089981"/>
<path d="M448.11 207.3V217.9" stroke="#089981" stroke-width="0.72" opacity="0.9"/>
<rect x="447.48" y="209.7" width="1.26" height="7.2" fill="#089981"/>
<path d="M449.65 210.7V216.7" stroke="#089981" stroke-width="0.72" opacity="0.9"/>
<rect x="449.02" y="211.9" width="1.26" height="3.6" fill="#089981"/>
<path d="M451.19 210.9V213.0" stroke="#f23645" stroke-width="0.72" opacity="0.9"/>
<rect x="450.56" y="211.8" width="1.26" height="0.9" fill="#f23645"/>
<path d="M452.73 204.2V213.8" stroke="#089981" stroke-width="0.72" opacity="0.9"/>
<rect x="452.10" y="205.4" width="1.26" height="6.5" fill="#089981"/>
<path d="M454.27 191.6V209.2" stroke="#089981" stroke-width="0.72" opacity="0.9"/>
<rect x="453.64" y="197.4" width="1.26" height="8.7" fill="#089981"/>
<path d="M455.82 196.9V205.6" stroke="#f23645" stroke-width="0.72" opacity="0.9"/>
<rect x="455.19" y="198.1" width="1.26" height="5.8" fill="#f23645"/>
<path d="M457.36 193.1V206.4" stroke="#089981" stroke-width="0.72" opacity="0.9"/>
<rect x="456.73" y="196.0" width="1.26" height="7.2" fill="#089981"/>
<path d="M458.90 186.9V199.9" stroke="#089981" stroke-width="0.72" opacity="0.9"/>
<rect x="458.27" y="189.5" width="1.26" height="8.7" fill="#089981"/>
<path d="M460.44 180.8V193.3" stroke="#089981" stroke-width="0.72" opacity="0.9"/>
<rect x="459.81" y="183.7" width="1.26" height="8.7" fill="#089981"/>
<path d="M461.98 180.5V204.2" stroke="#f23645" stroke-width="0.72" opacity="0.9"/>
<rect x="461.35" y="183.7" width="1.26" height="17.4" fill="#f23645"/>
<path d="M463.52 199.9V210.5" stroke="#f23645" stroke-width="0.72" opacity="0.9"/>
<rect x="462.89" y="200.4" width="1.26" height="3.6" fill="#f23645"/>
<path d="M465.07 196.1V204.2" stroke="#089981" stroke-width="0.72" opacity="0.9"/>
<rect x="464.44" y="197.5" width="1.26" height="4.3" fill="#089981"/>
<path d="M466.61 196.4V198.8" stroke="#f23645" stroke-width="0.72" opacity="0.9"/>
<rect x="465.98" y="197.4" width="1.26" height="0.9" fill="#f23645"/>
<path d="M468.15 191.6V200.5" stroke="#089981" stroke-width="0.72" opacity="0.9"/>
<rect x="467.52" y="193.9" width="1.26" height="4.3" fill="#089981"/>
<path d="M469.69 192.8V205.1" stroke="#f23645" stroke-width="0.72" opacity="0.9"/>
<rect x="469.06" y="193.9" width="1.26" height="10.1" fill="#f23645"/>
<path d="M471.23 201.2V212.6" stroke="#f23645" stroke-width="0.72" opacity="0.9"/>
<rect x="470.60" y="204.0" width="1.26" height="7.2" fill="#f23645"/>
<path d="M472.77 203.3V216.2" stroke="#f23645" stroke-width="0.72" opacity="0.9"/>
<rect x="472.14" y="209.1" width="1.26" height="5.8" fill="#f23645"/>
<path d="M474.32 214.1V216.4" stroke="#f23645" stroke-width="0.72" opacity="0.9"/>
<rect x="473.69" y="214.8" width="1.26" height="0.9" fill="#f23645"/>
<path d="M475.86 214.0V219.0" stroke="#f23645" stroke-width="0.72" opacity="0.9"/>
<rect x="475.23" y="214.8" width="1.26" height="3.6" fill="#f23645"/>
<path d="M477.40 215.0V225.0" stroke="#f23645" stroke-width="0.72" opacity="0.9"/>
<rect x="476.77" y="216.3" width="1.26" height="5.1" fill="#f23645"/>
<path d="M478.94 209.4V224.5" stroke="#089981" stroke-width="0.72" opacity="0.9"/>
<rect x="478.31" y="211.9" width="1.26" height="9.4" fill="#089981"/>
<path d="M480.48 209.9V212.3" stroke="#089981" stroke-width="0.72" opacity="0.9"/>
<rect x="479.85" y="210.5" width="1.26" height="1.4" fill="#089981"/>
<path d="M482.02 208.7V211.3" stroke="#089981" stroke-width="0.72" opacity="0.9"/>
<rect x="481.39" y="209.6" width="1.26" height="0.9" fill="#089981"/>
<path d="M483.56 209.1V217.6" stroke="#f23645" stroke-width="0.72" opacity="0.9"/>
<rect x="482.93" y="210.5" width="1.26" height="5.1" fill="#f23645"/>
<path d="M485.11 199.5V218.4" stroke="#089981" stroke-width="0.72" opacity="0.9"/>
<rect x="484.48" y="202.5" width="1.26" height="13.0" fill="#089981"/>
<path d="M486.65 199.1V204.2" stroke="#089981" stroke-width="0.72" opacity="0.9"/>
<rect x="486.02" y="199.6" width="1.26" height="3.6" fill="#089981"/>
<path d="M488.19 196.0V200.5" stroke="#089981" stroke-width="0.72" opacity="0.9"/>
<rect x="487.56" y="196.8" width="1.26" height="2.9" fill="#089981"/>
<path d="M489.73 195.9V207.1" stroke="#f23645" stroke-width="0.72" opacity="0.9"/>
<rect x="489.10" y="197.5" width="1.26" height="6.5" fill="#f23645"/>
<path d="M491.27 201.9V206.5" stroke="#f23645" stroke-width="0.72" opacity="0.9"/>
<rect x="490.64" y="202.5" width="1.26" height="3.6" fill="#f23645"/>
<path d="M492.81 191.4V208.2" stroke="#089981" stroke-width="0.72" opacity="0.9"/>
<rect x="492.18" y="194.6" width="1.26" height="11.6" fill="#089981"/>
<path d="M494.36 188.8V195.8" stroke="#089981" stroke-width="0.72" opacity="0.9"/>
<rect x="493.73" y="191.7" width="1.26" height="3.6" fill="#089981"/>
<path d="M495.90 188.9V207.2" stroke="#f23645" stroke-width="0.72" opacity="0.9"/>
<rect x="495.27" y="191.7" width="1.26" height="12.3" fill="#f23645"/>
<path d="M497.44 202.1V209.1" stroke="#f23645" stroke-width="0.72" opacity="0.9"/>
<rect x="496.81" y="202.5" width="1.26" height="3.6" fill="#f23645"/>
<path d="M498.98 204.4V207.0" stroke="#089981" stroke-width="0.72" opacity="0.9"/>
<rect x="498.35" y="205.3" width="1.26" height="0.9" fill="#089981"/>
<path d="M500.52 198.2V208.0" stroke="#089981" stroke-width="0.72" opacity="0.9"/>
<rect x="499.89" y="202.5" width="1.26" height="3.6" fill="#089981"/>
<path d="M502.06 201.2V209.7" stroke="#f23645" stroke-width="0.72" opacity="0.9"/>
<rect x="501.43" y="202.5" width="1.26" height="6.5" fill="#f23645"/>
<path d="M503.61 206.5V218.8" stroke="#f23645" stroke-width="0.72" opacity="0.9"/>
<rect x="502.98" y="209.1" width="1.26" height="7.2" fill="#f23645"/>
<path d="M505.15 209.6V219.2" stroke="#089981" stroke-width="0.72" opacity="0.9"/>
<rect x="504.52" y="210.5" width="1.26" height="5.8" fill="#089981"/>
<path d="M506.69 209.1V216.7" stroke="#f23645" stroke-width="0.72" opacity="0.9"/>
<rect x="506.06" y="210.5" width="1.26" height="5.1" fill="#f23645"/>
<path d="M508.23 199.3V219.5" stroke="#089981" stroke-width="0.72" opacity="0.9"/>
<rect x="507.60" y="202.5" width="1.26" height="13.7" fill="#089981"/>
<path d="M509.77 200.6V206.6" stroke="#f23645" stroke-width="0.72" opacity="0.9"/>
<rect x="509.14" y="201.8" width="1.26" height="4.3" fill="#f23645"/>
<path d="M511.31 201.6V211.3" stroke="#f23645" stroke-width="0.72" opacity="0.9"/>
<rect x="510.68" y="204.0" width="1.26" height="5.8" fill="#f23645"/>
<path d="M512.86 206.6V222.0" stroke="#f23645" stroke-width="0.72" opacity="0.9"/>
<rect x="512.23" y="209.8" width="1.26" height="9.4" fill="#f23645"/>
<path d="M514.40 210.8V219.2" stroke="#089981" stroke-width="0.72" opacity="0.9"/>
<rect x="513.77" y="211.9" width="1.26" height="6.5" fill="#089981"/>
<path d="M515.94 209.1V213.4" stroke="#089981" stroke-width="0.72" opacity="0.9"/>
<rect x="515.31" y="210.5" width="1.26" height="2.2" fill="#089981"/>
<path d="M517.48 210.0V214.6" stroke="#f23645" stroke-width="0.72" opacity="0.9"/>
<rect x="516.85" y="211.2" width="1.26" height="2.9" fill="#f23645"/>
<path d="M519.02 210.6V215.0" stroke="#089981" stroke-width="0.72" opacity="0.9"/>
<rect x="518.39" y="211.9" width="1.26" height="2.2" fill="#089981"/>
<path d="M520.56 209.2V219.6" stroke="#f23645" stroke-width="0.72" opacity="0.9"/>
<rect x="519.93" y="211.9" width="1.26" height="5.8" fill="#f23645"/>
<path d="M522.10 215.2V217.6" stroke="#089981" stroke-width="0.72" opacity="0.9"/>
<rect x="521.47" y="215.6" width="1.26" height="1.4" fill="#089981"/>
<path d="M523.65 214.5V222.8" stroke="#f23645" stroke-width="0.72" opacity="0.9"/>
<rect x="523.02" y="215.6" width="1.26" height="5.1" fill="#f23645"/>
<path d="M525.19 209.5V223.8" stroke="#089981" stroke-width="0.72" opacity="0.9"/>
<rect x="524.56" y="211.2" width="1.26" height="9.4" fill="#089981"/>
<path d="M526.73 206.2V214.5" stroke="#f23645" stroke-width="0.72" opacity="0.9"/>
<rect x="526.10" y="211.2" width="1.26" height="2.2" fill="#f23645"/>
<path d="M528.27 210.9V216.3" stroke="#f23645" stroke-width="0.72" opacity="0.9"/>
<rect x="527.64" y="211.9" width="1.26" height="3.6" fill="#f23645"/>
<path d="M529.81 214.7V218.8" stroke="#f23645" stroke-width="0.72" opacity="0.9"/>
<rect x="529.18" y="215.6" width="1.26" height="2.2" fill="#f23645"/>
<path d="M531.35 216.6V218.5" stroke="#089981" stroke-width="0.72" opacity="0.9"/>
<rect x="530.72" y="216.9" width="1.26" height="0.9" fill="#089981"/>
<path d="M532.90 216.0V218.4" stroke="#089981" stroke-width="0.72" opacity="0.9"/>
<rect x="532.27" y="216.3" width="1.26" height="1.4" fill="#089981"/>
<path d="M534.44 211.9V217.4" stroke="#089981" stroke-width="0.72" opacity="0.9"/>
<rect x="533.81" y="213.4" width="1.26" height="2.9" fill="#089981"/>
<path d="M535.98 206.9V214.6" stroke="#089981" stroke-width="0.72" opacity="0.9"/>
<rect x="535.35" y="208.3" width="1.26" height="5.1" fill="#089981"/>
<path d="M537.52 194.3V211.0" stroke="#089981" stroke-width="0.72" opacity="0.9"/>
<rect x="536.89" y="197.5" width="1.26" height="10.8" fill="#089981"/>
<path d="M539.06 188.9V198.7" stroke="#089981" stroke-width="0.72" opacity="0.9"/>
<rect x="538.43" y="191.0" width="1.26" height="6.5" fill="#089981"/>
<path d="M540.60 185.2V193.1" stroke="#089981" stroke-width="0.72" opacity="0.9"/>
<rect x="539.97" y="188.8" width="1.26" height="3.6" fill="#089981"/>
<path d="M542.15 187.5V197.4" stroke="#f23645" stroke-width="0.72" opacity="0.9"/>
<rect x="541.52" y="189.5" width="1.26" height="6.5" fill="#f23645"/>
<path d="M543.69 192.5V202.2" stroke="#f23645" stroke-width="0.72" opacity="0.9"/>
<rect x="543.06" y="193.9" width="1.26" height="5.8" fill="#f23645"/>
<path d="M545.23 196.8V201.5" stroke="#f23645" stroke-width="0.72" opacity="0.9"/>
<rect x="544.60" y="197.5" width="1.26" height="3.6" fill="#f23645"/>
<path d="M546.77 197.1V203.6" stroke="#f23645" stroke-width="0.72" opacity="0.9"/>
<rect x="546.14" y="198.9" width="1.26" height="3.6" fill="#f23645"/>
<path d="M548.31 189.9V204.1" stroke="#089981" stroke-width="0.72" opacity="0.9"/>
<rect x="547.68" y="193.1" width="1.26" height="9.4" fill="#089981"/>
<path d="M549.85 190.9V197.0" stroke="#089981" stroke-width="0.72" opacity="0.9"/>
<rect x="549.22" y="191.7" width="1.26" height="3.6" fill="#089981"/>
<path d="M551.40 189.1V204.0" stroke="#f23645" stroke-width="0.72" opacity="0.9"/>
<rect x="550.77" y="191.7" width="1.26" height="9.4" fill="#f23645"/>
<path d="M552.94 199.4V205.5" stroke="#f23645" stroke-width="0.72" opacity="0.9"/>
<rect x="552.31" y="200.4" width="1.26" height="3.6" fill="#f23645"/>
<path d="M554.48 201.6V215.1" stroke="#f23645" stroke-width="0.72" opacity="0.9"/>
<rect x="553.85" y="204.0" width="1.26" height="8.0" fill="#f23645"/>
<path d="M556.02 208.4V218.5" stroke="#f23645" stroke-width="0.72" opacity="0.9"/>
<rect x="555.39" y="211.2" width="1.26" height="6.5" fill="#f23645"/>
<path d="M557.56 216.0V218.3" stroke="#089981" stroke-width="0.72" opacity="0.9"/>
<rect x="556.93" y="216.9" width="1.26" height="0.9" fill="#089981"/>
<path d="M559.10 211.9V218.1" stroke="#089981" stroke-width="0.72" opacity="0.9"/>
<rect x="558.47" y="213.4" width="1.26" height="3.6" fill="#089981"/>
<path d="M560.64 212.5V223.5" stroke="#f23645" stroke-width="0.72" opacity="0.9"/>
<rect x="560.01" y="214.1" width="1.26" height="8.0" fill="#f23645"/>
<path d="M562.19 215.7V224.4" stroke="#089981" stroke-width="0.72" opacity="0.9"/>
<rect x="561.56" y="217.7" width="1.26" height="4.3" fill="#089981"/>
<path d="M563.73 218.0V221.4" stroke="#f23645" stroke-width="0.72" opacity="0.9"/>
<rect x="563.10" y="218.5" width="1.26" height="2.2" fill="#f23645"/>
<path d="M565.27 215.3V222.4" stroke="#089981" stroke-width="0.72" opacity="0.9"/>
<rect x="564.64" y="217.0" width="1.26" height="3.6" fill="#089981"/>
<path d="M566.81 216.0V218.4" stroke="#f23645" stroke-width="0.72" opacity="0.9"/>
<rect x="566.18" y="217.0" width="1.26" height="0.9" fill="#f23645"/>
<path d="M568.35 216.4V224.6" stroke="#f23645" stroke-width="0.72" opacity="0.9"/>
<rect x="567.72" y="217.0" width="1.26" height="5.1" fill="#f23645"/>
<path d="M569.89 210.2V222.8" stroke="#089981" stroke-width="0.72" opacity="0.9"/>
<rect x="569.26" y="213.4" width="1.26" height="7.2" fill="#089981"/>
<path d="M571.44 207.7V214.7" stroke="#089981" stroke-width="0.72" opacity="0.9"/>
<rect x="570.81" y="209.1" width="1.26" height="4.3" fill="#089981"/>
<path d="M572.98 206.9V213.7" stroke="#f23645" stroke-width="0.72" opacity="0.9"/>
<rect x="572.35" y="208.3" width="1.26" height="3.6" fill="#f23645"/>
<path d="M574.52 210.5V215.5" stroke="#f23645" stroke-width="0.72" opacity="0.9"/>
<rect x="573.89" y="211.2" width="1.26" height="3.6" fill="#f23645"/>
<path d="M576.06 211.6V216.7" stroke="#f23645" stroke-width="0.72" opacity="0.9"/>
<rect x="575.43" y="213.4" width="1.26" height="2.9" fill="#f23645"/>
<path d="M577.60 206.2V218.6" stroke="#089981" stroke-width="0.72" opacity="0.9"/>
<rect x="576.97" y="208.3" width="1.26" height="7.2" fill="#089981"/>
<path d="M579.14 205.4V219.5" stroke="#f23645" stroke-width="0.72" opacity="0.9"/>
<rect x="578.51" y="208.3" width="1.26" height="8.0" fill="#f23645"/>
<path d="M580.69 212.2V218.2" stroke="#f23645" stroke-width="0.72" opacity="0.9"/>
<rect x="580.06" y="214.1" width="1.26" height="3.6" fill="#f23645"/>
<path d="M582.23 212.4V221.1" stroke="#f23645" stroke-width="0.72" opacity="0.9"/>
<rect x="581.60" y="214.8" width="1.26" height="5.8" fill="#f23645"/>
<path d="M583.77 217.5V305.6" stroke="#f23645" stroke-width="0.72" opacity="0.9"/>
<rect x="583.14" y="220.6" width="1.26" height="26.2" fill="#f23645"/>
<path d="M585.31 232.0V247.8" stroke="#089981" stroke-width="0.72" opacity="0.9"/>
<rect x="584.68" y="235.2" width="1.26" height="11.6" fill="#089981"/>
<path d="M586.85 223.3V238.4" stroke="#089981" stroke-width="0.72" opacity="0.9"/>
<rect x="586.22" y="226.5" width="1.26" height="8.7" fill="#089981"/>
<path d="M588.39 224.1V231.6" stroke="#f23645" stroke-width="0.72" opacity="0.9"/>
<rect x="587.76" y="225.8" width="1.26" height="4.3" fill="#f23645"/>
<path d="M589.94 225.6V240.6" stroke="#f23645" stroke-width="0.72" opacity="0.9"/>
<rect x="589.31" y="228.0" width="1.26" height="9.4" fill="#f23645"/>
<path d="M591.48 234.8V238.0" stroke="#089981" stroke-width="0.72" opacity="0.9"/>
<rect x="590.85" y="235.2" width="1.26" height="2.2" fill="#089981"/>
<path d="M593.02 232.1V242.8" stroke="#f23645" stroke-width="0.72" opacity="0.9"/>
<rect x="592.39" y="235.2" width="1.26" height="6.5" fill="#f23645"/>
<path d="M594.56 240.2V248.9" stroke="#f23645" stroke-width="0.72" opacity="0.9"/>
<rect x="593.93" y="241.0" width="1.26" height="3.6" fill="#f23645"/>
<path d="M596.10 240.4V244.1" stroke="#089981" stroke-width="0.72" opacity="0.9"/>
<rect x="595.47" y="241.7" width="1.26" height="2.2" fill="#089981"/>
<path d="M597.64 233.2V244.9" stroke="#089981" stroke-width="0.72" opacity="0.9"/>
<rect x="597.01" y="235.2" width="1.26" height="6.5" fill="#089981"/>
<path d="M599.18 233.3V235.7" stroke="#089981" stroke-width="0.72" opacity="0.9"/>
<rect x="598.55" y="233.7" width="1.26" height="1.4" fill="#089981"/>
<path d="M600.73 230.5V243.1" stroke="#f23645" stroke-width="0.72" opacity="0.9"/>
<rect x="600.10" y="233.7" width="1.26" height="8.0" fill="#f23645"/>
<path d="M602.27 240.6V246.8" stroke="#f23645" stroke-width="0.72" opacity="0.9"/>
<rect x="601.64" y="241.7" width="1.26" height="2.9" fill="#f23645"/>
<path d="M603.81 238.8V245.0" stroke="#089981" stroke-width="0.72" opacity="0.9"/>
<rect x="603.18" y="240.2" width="1.26" height="4.3" fill="#089981"/>
<path d="M605.35 237.3V241.3" stroke="#089981" stroke-width="0.72" opacity="0.9"/>
<rect x="604.72" y="238.1" width="1.26" height="2.2" fill="#089981"/>
<path d="M606.89 234.7V239.5" stroke="#089981" stroke-width="0.72" opacity="0.9"/>
<rect x="606.26" y="235.2" width="1.26" height="3.6" fill="#089981"/>
<path d="M608.43 233.5V236.0" stroke="#089981" stroke-width="0.72" opacity="0.9"/>
<rect x="607.80" y="234.4" width="1.26" height="0.9" fill="#089981"/>
<path d="M609.98 234.0V238.8" stroke="#f23645" stroke-width="0.72" opacity="0.9"/>
<rect x="609.35" y="234.5" width="1.26" height="3.6" fill="#f23645"/>
<path d="M611.52 235.4V242.1" stroke="#f23645" stroke-width="0.72" opacity="0.9"/>
<rect x="610.89" y="236.6" width="1.26" height="4.3" fill="#f23645"/>
<path d="M613.06 238.1V245.6" stroke="#f23645" stroke-width="0.72" opacity="0.9"/>
<rect x="612.43" y="239.5" width="1.26" height="4.3" fill="#f23645"/>
<path d="M614.60 239.4V248.9" stroke="#f23645" stroke-width="0.72" opacity="0.9"/>
<rect x="613.97" y="241.7" width="1.26" height="5.8" fill="#f23645"/>
<path d="M616.14 242.9V248.5" stroke="#089981" stroke-width="0.72" opacity="0.9"/>
<rect x="615.51" y="243.9" width="1.26" height="3.6" fill="#089981"/>
<path d="M617.68 242.9V244.4" stroke="#089981" stroke-width="0.72" opacity="0.9"/>
<rect x="617.05" y="243.1" width="1.26" height="0.9" fill="#089981"/>
<path d="M619.23 242.0V247.9" stroke="#f23645" stroke-width="0.72" opacity="0.9"/>
<rect x="618.60" y="243.9" width="1.26" height="3.6" fill="#f23645"/>
<path d="M620.77 244.4V260.8" stroke="#f23645" stroke-width="0.72" opacity="0.9"/>
<rect x="620.14" y="247.5" width="1.26" height="11.6" fill="#f23645"/>
<path d="M622.31 254.2V264.8" stroke="#f23645" stroke-width="0.72" opacity="0.9"/>
<rect x="621.68" y="256.2" width="1.26" height="4.3" fill="#f23645"/>
<path d="M623.85 255.4V261.8" stroke="#089981" stroke-width="0.72" opacity="0.9"/>
<rect x="623.22" y="256.2" width="1.26" height="4.3" fill="#089981"/>
<path d="M625.39 255.3V261.7" stroke="#f23645" stroke-width="0.72" opacity="0.9"/>
<rect x="624.76" y="256.2" width="1.26" height="3.6" fill="#f23645"/>
<path d="M626.93 245.2V263.0" stroke="#089981" stroke-width="0.72" opacity="0.9"/>
<rect x="626.30" y="246.8" width="1.26" height="13.0" fill="#089981"/>
<path d="M628.48 245.7V255.0" stroke="#f23645" stroke-width="0.72" opacity="0.9"/>
<rect x="627.85" y="247.5" width="1.26" height="5.1" fill="#f23645"/>
<path d="M630.02 247.0V253.8" stroke="#089981" stroke-width="0.72" opacity="0.9"/>
<rect x="629.39" y="248.2" width="1.26" height="3.6" fill="#089981"/>
<path d="M631.56 245.6V250.1" stroke="#089981" stroke-width="0.72" opacity="0.9"/>
<rect x="630.93" y="246.0" width="1.26" height="2.9" fill="#089981"/>
<path d="M633.10 241.5V251.8" stroke="#f23645" stroke-width="0.72" opacity="0.9"/>
<rect x="632.47" y="244.6" width="1.26" height="6.5" fill="#f23645"/>
<path d="M634.64 248.4V255.8" stroke="#f23645" stroke-width="0.72" opacity="0.9"/>
<rect x="634.01" y="248.9" width="1.26" height="5.1" fill="#f23645"/>
<path d="M636.18 249.6V259.1" stroke="#f23645" stroke-width="0.72" opacity="0.9"/>
<rect x="635.55" y="251.1" width="1.26" height="5.8" fill="#f23645"/>
<path d="M637.72 255.2V263.6" stroke="#f23645" stroke-width="0.72" opacity="0.9"/>
<rect x="637.09" y="256.2" width="1.26" height="5.8" fill="#f23645"/>
<path d="M639.27 258.6V262.6" stroke="#089981" stroke-width="0.72" opacity="0.9"/>
<rect x="638.64" y="259.8" width="1.26" height="2.2" fill="#089981"/>
<path d="M640.81 259.1V265.5" stroke="#f23645" stroke-width="0.72" opacity="0.9"/>
<rect x="640.18" y="259.8" width="1.26" height="5.1" fill="#f23645"/>
<path d="M642.35 263.4V269.2" stroke="#f23645" stroke-width="0.72" opacity="0.9"/>
<rect x="641.72" y="264.1" width="1.26" height="4.3" fill="#f23645"/>
<path d="M643.89 264.3V269.5" stroke="#089981" stroke-width="0.72" opacity="0.9"/>
<rect x="643.26" y="265.6" width="1.26" height="2.9" fill="#089981"/>
<path d="M645.43 264.1V271.8" stroke="#f23645" stroke-width="0.72" opacity="0.9"/>
<rect x="644.80" y="265.6" width="1.26" height="5.1" fill="#f23645"/>
<path d="M646.97 267.6V278.3" stroke="#f23645" stroke-width="0.72" opacity="0.9"/>
<rect x="646.34" y="269.9" width="1.26" height="5.8" fill="#f23645"/>
<path d="M648.52 272.9V279.6" stroke="#f23645" stroke-width="0.72" opacity="0.9"/>
<rect x="647.89" y="275.0" width="1.26" height="3.6" fill="#f23645"/>
<path d="M650.06 273.3V277.6" stroke="#089981" stroke-width="0.72" opacity="0.9"/>
<rect x="649.43" y="274.2" width="1.26" height="2.9" fill="#089981"/>
<path d="M651.60 273.2V274.5" stroke="#089981" stroke-width="0.72" opacity="0.9"/>
<rect x="650.97" y="273.4" width="1.26" height="0.9" fill="#089981"/>
<path d="M653.14 271.3V275.6" stroke="#089981" stroke-width="0.72" opacity="0.9"/>
<rect x="652.51" y="272.1" width="1.26" height="2.2" fill="#089981"/>
<path d="M654.68 268.9V273.3" stroke="#089981" stroke-width="0.72" opacity="0.9"/>
<rect x="654.05" y="269.9" width="1.26" height="2.2" fill="#089981"/>
<path d="M656.22 267.9V270.9" stroke="#089981" stroke-width="0.72" opacity="0.9"/>
<rect x="655.59" y="268.5" width="1.26" height="1.4" fill="#089981"/>
<path d="M657.77 266.5V269.5" stroke="#089981" stroke-width="0.72" opacity="0.9"/>
<rect x="657.14" y="267.0" width="1.26" height="1.4" fill="#089981"/>
<path d="M659.31 268.2V270.8" stroke="#f23645" stroke-width="0.72" opacity="0.9"/>
<rect x="658.68" y="268.5" width="1.26" height="1.4" fill="#f23645"/>
<path d="M660.85 269.5V272.1" stroke="#f23645" stroke-width="0.72" opacity="0.9"/>
<rect x="660.22" y="269.9" width="1.26" height="1.4" fill="#f23645"/>
<path d="M662.39 270.0V271.9" stroke="#089981" stroke-width="0.72" opacity="0.9"/>
<rect x="661.76" y="270.5" width="1.26" height="0.9" fill="#089981"/>
<path d="M663.93 268.1V279.0" stroke="#f23645" stroke-width="0.72" opacity="0.9"/>
<rect x="663.30" y="270.6" width="1.26" height="6.5" fill="#f23645"/>
<path d="M665.47 268.4V278.3" stroke="#089981" stroke-width="0.72" opacity="0.9"/>
<rect x="664.84" y="270.6" width="1.26" height="6.5" fill="#089981"/>
<path d="M667.02 269.1V271.2" stroke="#089981" stroke-width="0.72" opacity="0.9"/>
<rect x="666.39" y="269.8" width="1.26" height="0.9" fill="#089981"/>
<path d="M668.56 268.8V275.6" stroke="#f23645" stroke-width="0.72" opacity="0.9"/>
<rect x="667.93" y="269.9" width="1.26" height="4.3" fill="#f23645"/>
<path d="M670.10 272.0V276.8" stroke="#f23645" stroke-width="0.72" opacity="0.9"/>
<rect x="669.47" y="273.5" width="1.26" height="2.9" fill="#f23645"/>
<path d="M671.64 275.3V276.7" stroke="#089981" stroke-width="0.72" opacity="0.9"/>
<rect x="671.01" y="275.6" width="1.26" height="0.9" fill="#089981"/>
<path d="M673.18 274.7V278.6" stroke="#f23645" stroke-width="0.72" opacity="0.9"/>
<rect x="672.55" y="275.7" width="1.26" height="2.2" fill="#f23645"/>
<path d="M674.72 272.5V280.1" stroke="#089981" stroke-width="0.72" opacity="0.9"/>
<rect x="674.09" y="273.5" width="1.26" height="4.3" fill="#089981"/>
<path d="M676.26 269.5V275.2" stroke="#089981" stroke-width="0.72" opacity="0.9"/>
<rect x="675.63" y="269.9" width="1.26" height="3.6" fill="#089981"/>
<path d="M677.81 268.6V274.5" stroke="#f23645" stroke-width="0.72" opacity="0.9"/>
<rect x="677.18" y="269.9" width="1.26" height="2.9" fill="#f23645"/>
<path d="M679.35 272.0V277.1" stroke="#f23645" stroke-width="0.72" opacity="0.9"/>
<rect x="678.72" y="272.8" width="1.26" height="2.9" fill="#f23645"/>
<path d="M680.89 273.8V279.4" stroke="#f23645" stroke-width="0.72" opacity="0.9"/>
<rect x="680.26" y="275.0" width="1.26" height="2.9" fill="#f23645"/>
<path d="M682.43 275.7V279.6" stroke="#f23645" stroke-width="0.72" opacity="0.9"/>
<rect x="681.80" y="277.1" width="1.26" height="2.2" fill="#f23645"/>
<path d="M683.97 276.8V279.6" stroke="#089981" stroke-width="0.72" opacity="0.9"/>
<rect x="683.34" y="277.9" width="1.26" height="1.4" fill="#089981"/>
<path d="M685.51 275.8V284.4" stroke="#f23645" stroke-width="0.72" opacity="0.9"/>
<rect x="684.88" y="277.9" width="1.26" height="5.1" fill="#f23645"/>
<path d="M687.06 280.7V286.6" stroke="#f23645" stroke-width="0.72" opacity="0.9"/>
<rect x="686.43" y="282.2" width="1.26" height="2.9" fill="#f23645"/>
<path d="M688.60 282.7V288.8" stroke="#f23645" stroke-width="0.72" opacity="0.9"/>
<rect x="687.97" y="284.4" width="1.26" height="2.9" fill="#f23645"/>
<path d="M690.14 286.0V291.4" stroke="#f23645" stroke-width="0.72" opacity="0.9"/>
<rect x="689.51" y="286.5" width="1.26" height="3.6" fill="#f23645"/>
<path d="M691.68 285.4V291.4" stroke="#089981" stroke-width="0.72" opacity="0.9"/>
<rect x="691.05" y="285.8" width="1.26" height="3.6" fill="#089981"/>
<path d="M693.22 285.3V287.4" stroke="#089981" stroke-width="0.72" opacity="0.9"/>
<rect x="692.59" y="285.7" width="1.26" height="0.9" fill="#089981"/>
<path d="M694.76 284.7V286.2" stroke="#089981" stroke-width="0.72" opacity="0.9"/>
<rect x="694.13" y="285.0" width="1.26" height="0.9" fill="#089981"/>
<path d="M696.31 284.8V287.2" stroke="#f23645" stroke-width="0.72" opacity="0.9"/>
<rect x="695.68" y="285.7" width="1.26" height="0.9" fill="#f23645"/>
<path d="M697.85 285.6V288.4" stroke="#f23645" stroke-width="0.72" opacity="0.9"/>
<rect x="697.22" y="286.5" width="1.26" height="1.2" fill="#f23645"/>
<path d="M699.39 286.4V289.8" stroke="#f23645" stroke-width="0.72" opacity="0.9"/>
<rect x="698.76" y="287.3" width="1.26" height="1.9" fill="#f23645"/>
<path d="M700.93 287.1V290.5" stroke="#f23645" stroke-width="0.72" opacity="0.9"/>
<rect x="700.30" y="287.5" width="1.26" height="2.2" fill="#f23645"/>
<path d="M702.47 286.5V290.6" stroke="#089981" stroke-width="0.72" opacity="0.9"/>
<rect x="701.84" y="287.5" width="1.26" height="2.2" fill="#089981"/>
<path d="M704.01 286.1V287.9" stroke="#089981" stroke-width="0.72" opacity="0.9"/>
<rect x="703.38" y="286.7" width="1.26" height="0.9" fill="#089981"/>
<path d="M705.56 285.5V287.9" stroke="#089981" stroke-width="0.72" opacity="0.9"/>
<rect x="704.93" y="286.1" width="1.26" height="1.4" fill="#089981"/>
<path d="M707.10 285.8V289.3" stroke="#f23645" stroke-width="0.72" opacity="0.9"/>
<rect x="706.47" y="286.1" width="1.26" height="2.2" fill="#f23645"/>
<path d="M708.64 287.9V290.3" stroke="#f23645" stroke-width="0.72" opacity="0.9"/>
<rect x="708.01" y="288.3" width="1.26" height="1.4" fill="#f23645"/>
<path d="M710.18 287.5V292.6" stroke="#f23645" stroke-width="0.72" opacity="0.9"/>
<rect x="709.55" y="289.0" width="1.26" height="2.2" fill="#f23645"/>
<path d="M711.72 281.2V292.3" stroke="#089981" stroke-width="0.72" opacity="0.9"/>
<rect x="711.09" y="282.5" width="1.26" height="8.7" fill="#089981"/>
<path d="M713.26 280.4V283.6" stroke="#089981" stroke-width="0.72" opacity="0.9"/>
<rect x="712.63" y="281.0" width="1.26" height="1.4" fill="#089981"/>
<path d="M714.80 280.6V282.5" stroke="#f23645" stroke-width="0.72" opacity="0.9"/>
<rect x="714.17" y="280.9" width="1.26" height="0.9" fill="#f23645"/>
<path d="M716.35 279.3V282.7" stroke="#089981" stroke-width="0.72" opacity="0.9"/>
<rect x="715.72" y="280.3" width="1.26" height="1.4" fill="#089981"/>
<path d="M717.89 276.9V280.9" stroke="#089981" stroke-width="0.72" opacity="0.9"/>
<rect x="717.26" y="278.1" width="1.26" height="2.2" fill="#089981"/>
<path d="M719.43 276.0V279.5" stroke="#089981" stroke-width="0.72" opacity="0.9"/>
<rect x="718.80" y="276.7" width="1.26" height="2.2" fill="#089981"/>
<path d="M720.97 276.4V283.5" stroke="#f23645" stroke-width="0.72" opacity="0.9"/>
<rect x="720.34" y="277.4" width="1.26" height="5.1" fill="#f23645"/>
<path d="M722.51 281.9V285.5" stroke="#f23645" stroke-width="0.72" opacity="0.9"/>
<rect x="721.88" y="282.5" width="1.26" height="2.2" fill="#f23645"/>
<path d="M724.05 283.5V285.8" stroke="#f23645" stroke-width="0.72" opacity="0.9"/>
<rect x="723.42" y="283.9" width="1.26" height="1.4" fill="#f23645"/>
<path d="M725.60 284.2V287.2" stroke="#f23645" stroke-width="0.72" opacity="0.9"/>
<rect x="724.97" y="284.6" width="1.26" height="1.4" fill="#f23645"/>
<path d="M727.14 285.0V286.4" stroke="#089981" stroke-width="0.72" opacity="0.9"/>
<rect x="726.51" y="285.3" width="1.26" height="0.9" fill="#089981"/>
<path d="M728.68 284.8V288.1" stroke="#f23645" stroke-width="0.72" opacity="0.9"/>
<rect x="728.05" y="285.4" width="1.26" height="2.2" fill="#f23645"/>
<path d="M730.22 281.8V289.2" stroke="#089981" stroke-width="0.72" opacity="0.9"/>
<rect x="729.59" y="283.2" width="1.26" height="4.3" fill="#089981"/>
<path d="M731.76 282.8V287.1" stroke="#f23645" stroke-width="0.72" opacity="0.9"/>
<rect x="731.13" y="283.2" width="1.26" height="2.9" fill="#f23645"/>
<path d="M733.30 285.0V288.6" stroke="#f23645" stroke-width="0.72" opacity="0.9"/>
<rect x="732.67" y="285.4" width="1.26" height="2.9" fill="#f23645"/>
<path d="M734.85 284.7V288.8" stroke="#089981" stroke-width="0.72" opacity="0.9"/>
<rect x="734.22" y="286.1" width="1.26" height="2.2" fill="#089981"/>
<path d="M736.39 284.8V291.6" stroke="#f23645" stroke-width="0.72" opacity="0.9"/>
<rect x="735.76" y="286.1" width="1.26" height="4.3" fill="#f23645"/>
<path d="M737.93 287.8V294.1" stroke="#f23645" stroke-width="0.72" opacity="0.9"/>
<rect x="737.30" y="289.7" width="1.26" height="3.6" fill="#f23645"/>
<path d="M739.47 292.2V296.7" stroke="#f23645" stroke-width="0.72" opacity="0.9"/>
<rect x="738.84" y="292.6" width="1.26" height="2.9" fill="#f23645"/>
<path d="M741.01 292.0V296.0" stroke="#089981" stroke-width="0.72" opacity="0.9"/>
<rect x="740.38" y="293.3" width="1.26" height="2.2" fill="#089981"/>
<path d="M742.55 292.3V294.0" stroke="#089981" stroke-width="0.72" opacity="0.9"/>
<rect x="741.92" y="292.5" width="1.26" height="0.9" fill="#089981"/>
<path d="M744.10 292.6V294.4" stroke="#089981" stroke-width="0.72" opacity="0.9"/>
<rect x="743.47" y="292.9" width="1.26" height="0.9" fill="#089981"/>
<path d="M745.64 289.9V294.4" stroke="#089981" stroke-width="0.72" opacity="0.9"/>
<rect x="745.01" y="291.2" width="1.26" height="2.2" fill="#089981"/>
<path d="M747.18 291.6V295.1" stroke="#f23645" stroke-width="0.72" opacity="0.9"/>
<rect x="746.55" y="291.9" width="1.26" height="2.2" fill="#f23645"/>
<path d="M748.72 292.2V296.2" stroke="#f23645" stroke-width="0.72" opacity="0.9"/>
<rect x="748.09" y="293.3" width="1.26" height="2.2" fill="#f23645"/>
<path d="M750.26 293.8V296.0" stroke="#089981" stroke-width="0.72" opacity="0.9"/>
<rect x="749.63" y="294.1" width="1.26" height="1.4" fill="#089981"/>
<path d="M751.80 292.4V295.3" stroke="#089981" stroke-width="0.72" opacity="0.9"/>
<rect x="751.17" y="292.6" width="1.26" height="1.4" fill="#089981"/>
<path d="M753.34 291.3V299.0" stroke="#f23645" stroke-width="0.72" opacity="0.9"/>
<rect x="752.71" y="291.9" width="1.26" height="5.1" fill="#f23645"/>
<path d="M754.89 295.2V297.9" stroke="#089981" stroke-width="0.72" opacity="0.9"/>
<rect x="754.26" y="296.1" width="1.26" height="0.9" fill="#089981"/>
<path d="M756.43 294.9V299.2" stroke="#f23645" stroke-width="0.72" opacity="0.9"/>
<rect x="755.80" y="296.2" width="1.26" height="2.2" fill="#f23645"/>
<path d="M757.97 296.4V304.2" stroke="#f23645" stroke-width="0.72" opacity="0.9"/>
<rect x="757.34" y="297.7" width="1.26" height="5.1" fill="#f23645"/>
<path d="M759.51 299.5V303.1" stroke="#f23645" stroke-width="0.72" opacity="0.9"/>
<rect x="758.88" y="300.6" width="1.26" height="2.2" fill="#f23645"/>
<path d="M761.05 300.3V303.6" stroke="#089981" stroke-width="0.72" opacity="0.9"/>
<rect x="760.42" y="300.6" width="1.26" height="2.2" fill="#089981"/>
<path d="M762.59 299.7V303.5" stroke="#f23645" stroke-width="0.72" opacity="0.9"/>
<rect x="761.96" y="300.6" width="1.26" height="2.2" fill="#f23645"/>
<path d="M764.14 300.5V306.2" stroke="#f23645" stroke-width="0.72" opacity="0.9"/>
<rect x="763.51" y="302.0" width="1.26" height="2.9" fill="#f23645"/>
<path d="M765.68 304.2V310.7" stroke="#f23645" stroke-width="0.72" opacity="0.9"/>
<rect x="765.05" y="304.9" width="1.26" height="4.3" fill="#f23645"/>
<path d="M767.22 301.3V312.1" stroke="#089981" stroke-width="0.72" opacity="0.9"/>
<rect x="766.59" y="303.5" width="1.26" height="5.8" fill="#089981"/>
<path d="M768.76 302.8V305.4" stroke="#f23645" stroke-width="0.72" opacity="0.9"/>
<rect x="768.13" y="303.5" width="1.26" height="1.4" fill="#f23645"/>
<path d="M770.30 303.0V306.5" stroke="#f23645" stroke-width="0.72" opacity="0.9"/>
<rect x="769.67" y="304.2" width="1.26" height="1.4" fill="#f23645"/>
<path d="M771.84 304.3V305.9" stroke="#089981" stroke-width="0.72" opacity="0.9"/>
<rect x="771.21" y="304.8" width="1.26" height="0.9" fill="#089981"/>
<path d="M773.39 303.9V307.4" stroke="#f23645" stroke-width="0.72" opacity="0.9"/>
<rect x="772.76" y="304.9" width="1.26" height="1.4" fill="#f23645"/>
<path d="M774.93 305.0V307.3" stroke="#f23645" stroke-width="0.72" opacity="0.9"/>
<rect x="774.30" y="305.6" width="1.26" height="1.4" fill="#f23645"/>
<path d="M776.47 303.7V308.3" stroke="#089981" stroke-width="0.72" opacity="0.9"/>
<rect x="775.84" y="304.9" width="1.26" height="2.2" fill="#089981"/>
<path d="M778.01 300.7V305.8" stroke="#089981" stroke-width="0.72" opacity="0.9"/>
<rect x="777.38" y="302.0" width="1.26" height="2.9" fill="#089981"/>
<path d="M779.55 299.1V303.6" stroke="#089981" stroke-width="0.72" opacity="0.9"/>
<rect x="778.92" y="299.8" width="1.26" height="2.9" fill="#089981"/>
<path d="M781.09 298.4V302.8" stroke="#f23645" stroke-width="0.72" opacity="0.9"/>
<rect x="780.46" y="299.8" width="1.26" height="2.2" fill="#f23645"/>
<path d="M782.64 301.0V302.7" stroke="#f23645" stroke-width="0.72" opacity="0.9"/>
<rect x="782.01" y="301.3" width="1.26" height="1.2" fill="#f23645"/>
<path d="M784.18 302.1V303.9" stroke="#f23645" stroke-width="0.72" opacity="0.9"/>
<rect x="783.55" y="302.4" width="1.26" height="0.9" fill="#f23645"/>
<path d="M785.72 301.4V304.4" stroke="#f23645" stroke-width="0.72" opacity="0.9"/>
<rect x="785.09" y="302.0" width="1.26" height="1.4" fill="#f23645"/>
<path d="M787.26 302.4V304.4" stroke="#f23645" stroke-width="0.72" opacity="0.9"/>
<rect x="786.63" y="302.7" width="1.26" height="1.4" fill="#f23645"/>
<path d="M788.80 302.4V305.2" stroke="#089981" stroke-width="0.72" opacity="0.9"/>
<rect x="788.17" y="302.7" width="1.26" height="1.4" fill="#089981"/>
<path d="M790.34 302.0V305.9" stroke="#f23645" stroke-width="0.72" opacity="0.9"/>
<rect x="789.71" y="302.7" width="1.26" height="2.2" fill="#f23645"/>
<path d="M791.88 303.0V306.6" stroke="#f23645" stroke-width="0.72" opacity="0.9"/>
<rect x="791.25" y="304.2" width="1.26" height="1.4" fill="#f23645"/>
<path d="M793.43 304.5V307.4" stroke="#f23645" stroke-width="0.72" opacity="0.9"/>
<rect x="792.80" y="304.9" width="1.26" height="1.9" fill="#f23645"/>
<path d="M794.97 305.6V307.1" stroke="#089981" stroke-width="0.72" opacity="0.9"/>
<rect x="794.34" y="305.9" width="1.26" height="0.9" fill="#089981"/>
<path d="M796.51 300.1V306.9" stroke="#089981" stroke-width="0.72" opacity="0.9"/>
<rect x="795.88" y="302.0" width="1.26" height="4.3" fill="#089981"/>
<path d="M798.05 301.3V305.4" stroke="#f23645" stroke-width="0.72" opacity="0.9"/>
<rect x="797.42" y="302.0" width="1.26" height="2.2" fill="#f23645"/>
<path d="M799.59 302.3V306.5" stroke="#f23645" stroke-width="0.72" opacity="0.9"/>
<rect x="798.96" y="303.5" width="1.26" height="1.9" fill="#f23645"/>
<path d="M801.13 302.8V307.1" stroke="#089981" stroke-width="0.72" opacity="0.9"/>
<rect x="800.50" y="303.5" width="1.26" height="2.2" fill="#089981"/>
<path d="M802.68 302.1V305.9" stroke="#f23645" stroke-width="0.72" opacity="0.9"/>
<rect x="802.05" y="303.5" width="1.26" height="2.2" fill="#f23645"/>
<path d="M804.22 303.0V306.1" stroke="#089981" stroke-width="0.72" opacity="0.9"/>
<rect x="803.59" y="304.2" width="1.26" height="1.4" fill="#089981"/>
<path d="M805.76 301.5V305.1" stroke="#089981" stroke-width="0.72" opacity="0.9"/>
<rect x="805.13" y="302.4" width="1.26" height="1.7" fill="#089981"/>
<path d="M807.30 301.4V303.2" stroke="#089981" stroke-width="0.72" opacity="0.9"/>
<rect x="806.67" y="301.6" width="1.26" height="0.9" fill="#089981"/>
<path d="M808.84 301.8V305.3" stroke="#f23645" stroke-width="0.72" opacity="0.9"/>
<rect x="808.21" y="302.7" width="1.26" height="1.4" fill="#f23645"/>
<path d="M810.38 303.0V306.4" stroke="#f23645" stroke-width="0.72" opacity="0.9"/>
<rect x="809.75" y="303.9" width="1.26" height="1.4" fill="#f23645"/>
<path d="M811.93 304.1V307.2" stroke="#f23645" stroke-width="0.72" opacity="0.9"/>
<rect x="811.30" y="304.9" width="1.26" height="1.4" fill="#f23645"/>
<path d="M813.47 305.3V307.4" stroke="#f23645" stroke-width="0.72" opacity="0.9"/>
<rect x="812.84" y="305.6" width="1.26" height="1.2" fill="#f23645"/>
<path d="M815.01 304.0V307.1" stroke="#089981" stroke-width="0.72" opacity="0.9"/>
<rect x="814.38" y="304.9" width="1.26" height="1.9" fill="#089981"/>
<path d="M816.55 303.5V305.6" stroke="#089981" stroke-width="0.72" opacity="0.9"/>
<rect x="815.92" y="304.4" width="1.26" height="0.9" fill="#089981"/>
<path d="M818.09 303.2V304.8" stroke="#089981" stroke-width="0.72" opacity="0.9"/>
<rect x="817.46" y="303.6" width="1.26" height="0.9" fill="#089981"/>
<path d="M819.63 303.1V305.8" stroke="#089981" stroke-width="0.72" opacity="0.9"/>
<rect x="819.00" y="304.1" width="1.26" height="0.9" fill="#089981"/>
<path d="M821.18 301.6V304.6" stroke="#089981" stroke-width="0.72" opacity="0.9"/>
<rect x="820.55" y="302.4" width="1.26" height="1.7" fill="#089981"/>
<path d="M822.72 302.4V306.0" stroke="#f23645" stroke-width="0.72" opacity="0.9"/>
<rect x="822.09" y="303.5" width="1.26" height="1.4" fill="#f23645"/>
<path d="M824.26 300.0V305.5" stroke="#089981" stroke-width="0.72" opacity="0.9"/>
<rect x="823.63" y="301.3" width="1.26" height="2.9" fill="#089981"/>
<path d="M825.80 300.0V302.6" stroke="#089981" stroke-width="0.72" opacity="0.9"/>
<rect x="825.17" y="300.6" width="1.26" height="1.4" fill="#089981"/>
<path d="M827.34 299.9V303.1" stroke="#f23645" stroke-width="0.72" opacity="0.9"/>
<rect x="826.71" y="300.6" width="1.26" height="1.4" fill="#f23645"/>
<path d="M828.88 300.8V305.2" stroke="#f23645" stroke-width="0.72" opacity="0.9"/>
<rect x="828.25" y="302.0" width="1.26" height="2.2" fill="#f23645"/>
<path d="M830.42 303.4V305.3" stroke="#f23645" stroke-width="0.72" opacity="0.9"/>
<rect x="829.79" y="303.9" width="1.26" height="1.0" fill="#f23645"/>
</g>
</g>
<!-- labels -->
<rect x="930" y="300.2" width="36.2" height="18.5" fill="#f23645"/>
<rect x="930" y="422.4" width="26" height="10.4" fill="#fdd835"/>
<rect x="930" y="432.8" width="26" height="10.3" fill="#7e57c2"/>
<!-- lightning icon -->
<g transform="translate(830.2,331)" fill="none">
<circle r="7.6" fill="#080808"/>
<circle r="6" stroke="#9a3cb4" stroke-width="1.45"/>
<circle cx="4.1" cy="-4.3" r="2.9" fill="#0b0b0b"/>
<circle cx="4.1" cy="-4.3" r="1.85" fill="#f23645"/>
<path d="M1.6 -3L-2.6 0.45H-0.4L-1.9 3.5L2.4 -0.35H0.3Z" fill="#bb4fd6"/>
</g>
<g opacity="0.996">
<text x="5.85" y="11.6" font-size="8.2" fill="#e8e8e8" class="b" font-weight="bold" textLength="52.9" lengthAdjust="spacingAndGlyphs">nderitumichaelg</text>
<text x="61.1" y="11.6" font-size="8.2" fill="#e8e8e8" class="b" font-weight="bold" textLength="24.6" lengthAdjust="spacingAndGlyphs">created</text>
<text x="88.4" y="11.6" font-size="8.2" fill="#e8e8e8" class="b" font-weight="bold" textLength="13.5" lengthAdjust="spacingAndGlyphs">with</text>
<text x="105" y="11.6" font-size="8.2" fill="#e8e8e8" class="b" font-weight="bold" textLength="55.5" lengthAdjust="spacingAndGlyphs">TradingView.com,</text>
<text x="164.2" y="11.6" font-size="8.2" fill="#e8e8e8" class="b" font-weight="bold" textLength="12.0" lengthAdjust="spacingAndGlyphs">Mar</text>
<text x="178.7" y="11.6" font-size="8.2" fill="#e8e8e8" class="b" font-weight="bold" textLength="7.7" lengthAdjust="spacingAndGlyphs">19,</text>
<text x="190.5" y="11.6" font-size="8.2" fill="#e8e8e8" class="b" font-weight="bold" textLength="14.4" lengthAdjust="spacingAndGlyphs">2026</text>
<text x="207.6" y="11.6" font-size="8.2" fill="#e8e8e8" class="b" font-weight="bold" textLength="17.8" lengthAdjust="spacingAndGlyphs">21:44</text>
<text x="227.9" y="11.6" font-size="8.2" fill="#e8e8e8" class="b" font-weight="bold" textLength="12.9" lengthAdjust="spacingAndGlyphs">UTC</text>
<text x="10.8" y="27.7" font-size="7.2" fill="#d9d9d9" textLength="35.4" lengthAdjust="spacingAndGlyphs">ONDOUSDT</text>
<text x="48.9" y="27.7" font-size="7.2" fill="#d9d9d9" textLength="15.7" lengthAdjust="spacingAndGlyphs">SPOT</text>
<text x="72.3" y="27.7" font-size="7.2" fill="#d9d9d9" textLength="7.7" lengthAdjust="spacingAndGlyphs">1D</text>
<text x="87.7" y="27.7" font-size="7.2" fill="#d9d9d9" textLength="16.1" lengthAdjust="spacingAndGlyphs">Bybit</text>
<text x="68.5" y="27.7" font-size="7.2" fill="#d9d9d9" text-anchor="middle">·</text>
<text x="83.8" y="27.7" font-size="7.2" fill="#d9d9d9" text-anchor="middle">·</text>
<text x="108.4" y="27.7" font-size="7.2" textLength="26.6" lengthAdjust="spacingAndGlyphs" fill="#d9d9d9">O<tspan fill="#f23645">0.2670</tspan></text>
<text x="139.1" y="27.7" font-size="7.2" textLength="26.3" lengthAdjust="spacingAndGlyphs" fill="#d9d9d9">H<tspan fill="#f23645">0.2691</tspan></text>
<text x="170" y="27.7" font-size="7.2" textLength="24.9" lengthAdjust="spacingAndGlyphs" fill="#d9d9d9">L<tspan fill="#f23645">0.2529</tspan></text>
<text x="199.3" y="27.7" font-size="7.2" textLength="26.0" lengthAdjust="spacingAndGlyphs" fill="#d9d9d9">C<tspan fill="#f23645">0.2580</tspan></text>
<text x="230.2" y="27.7" font-size="7.2" fill="#f23645" textLength="25.4" lengthAdjust="spacingAndGlyphs">−0.0090</text>
<text x="258.4" y="27.7" font-size="7.2" fill="#f23645" textLength="26.7" lengthAdjust="spacingAndGlyphs">(−3.37%)</text>
<text x="11" y="350.7" font-size="7.2" fill="#d9d9d9" textLength="45.7" lengthAdjust="spacingAndGlyphs">RSI (14, close)</text>
<text x="61.2" y="350.7" font-size="7.2" fill="#8a63cf" textLength="17.8" lengthAdjust="spacingAndGlyphs" stroke="#8a63cf" stroke-width="0.15">46.24</text>
<text x="83.5" y="350.7" font-size="7.2" fill="#f5cb38" textLength="17.9" lengthAdjust="spacingAndGlyphs" stroke="#f5cb38" stroke-width="0.2">48.50</text>
<text x="934.7" y="43.8" font-size="7.2" fill="#d9d9d9" textLength="21.5" lengthAdjust="spacingAndGlyphs">2.2000</text>
<text x="934.7" y="70.9" font-size="7.2" fill="#d9d9d9" textLength="21.5" lengthAdjust="spacingAndGlyphs">2.0000</text>
<text x="934.7" y="98.0" font-size="7.2" fill="#d9d9d9" textLength="21.5" lengthAdjust="spacingAndGlyphs">1.8000</text>
<text x="934.7" y="125.1" font-size="7.2" fill="#d9d9d9" textLength="21.5" lengthAdjust="spacingAndGlyphs">1.6000</text>
<text x="934.7" y="152.3" font-size="7.2" fill="#d9d9d9" textLength="21.5" lengthAdjust="spacingAndGlyphs">1.4000</text>
<text x="934.7" y="179.4" font-size="7.2" fill="#d9d9d9" textLength="21.5" lengthAdjust="spacingAndGlyphs">1.2000</text>
<text x="934.7" y="206.5" font-size="7.2" fill="#d9d9d9" textLength="21.5" lengthAdjust="spacingAndGlyphs">1.0000</text>
<text x="934.7" y="233.6" font-size="7.2" fill="#d9d9d9" textLength="21.5" lengthAdjust="spacingAndGlyphs">0.8000</text>
<text x="934.7" y="260.7" font-size="7.2" fill="#d9d9d9" textLength="21.5" lengthAdjust="spacingAndGlyphs">0.6000</text>
<text x="934.7" y="287.9" font-size="7.2" fill="#d9d9d9" textLength="21.5" lengthAdjust="spacingAndGlyphs">0.4000</text>
<text x="934.9" y="350.5" font-size="7.2" fill="#d9d9d9" textLength="17.7" lengthAdjust="spacingAndGlyphs">90.00</text>
<text x="934.9" y="370.9" font-size="7.2" fill="#d9d9d9" textLength="17.7" lengthAdjust="spacingAndGlyphs">80.00</text>
<text x="934.9" y="391.3" font-size="7.2" fill="#d9d9d9" textLength="17.7" lengthAdjust="spacingAndGlyphs">70.00</text>
<text x="934.9" y="411.8" font-size="7.2" fill="#d9d9d9" textLength="17.7" lengthAdjust="spacingAndGlyphs">60.00</text>
<text x="934.9" y="452.6" font-size="7.2" fill="#d9d9d9" textLength="17.7" lengthAdjust="spacingAndGlyphs">40.00</text>
<text x="934.9" y="473.1" font-size="7.2" fill="#d9d9d9" textLength="17.7" lengthAdjust="spacingAndGlyphs">30.00</text>
<text x="934.9" y="493.5" font-size="7.2" fill="#d9d9d9" textLength="17.7" lengthAdjust="spacingAndGlyphs">20.00</text>
<text x="1.8" y="510.7" font-size="7.2" fill="#d9d9d9" textLength="10.9" lengthAdjust="spacingAndGlyphs" clip-path="url(#box)">Oct</text>
<text x="49.0" y="510.7" font-size="7.2" fill="#d9d9d9" textLength="12.0" lengthAdjust="spacingAndGlyphs">Nov</text>
<text x="95.3" y="510.7" font-size="7.2" fill="#d9d9d9" textLength="11.8" lengthAdjust="spacingAndGlyphs">Dec</text>
<text x="140.6" y="510.7" font-size="7.5" fill="#e4e4e4" class="b" font-weight="bold" textLength="16.8" lengthAdjust="spacingAndGlyphs">2025</text>
<text x="191.0" y="510.7" font-size="7.2" fill="#d9d9d9" textLength="11.6" lengthAdjust="spacingAndGlyphs">Feb</text>
<text x="234.1" y="510.7" font-size="7.2" fill="#d9d9d9" textLength="11.8" lengthAdjust="spacingAndGlyphs">Mar</text>
<text x="282.4" y="510.7" font-size="7.2" fill="#d9d9d9" textLength="10.8" lengthAdjust="spacingAndGlyphs">Apr</text>
<text x="327.7" y="510.7" font-size="7.2" fill="#d9d9d9" textLength="12.6" lengthAdjust="spacingAndGlyphs">May</text>
<text x="376.2" y="510.7" font-size="7.2" fill="#d9d9d9" textLength="11.2" lengthAdjust="spacingAndGlyphs">Jun</text>
<text x="423.6" y="510.7" font-size="7.2" fill="#d9d9d9" textLength="8.9" lengthAdjust="spacingAndGlyphs">Jul</text>
<text x="469.7" y="510.7" font-size="7.2" fill="#d9d9d9" textLength="12.3" lengthAdjust="spacingAndGlyphs">Aug</text>
<text x="517.5" y="510.7" font-size="7.2" fill="#d9d9d9" textLength="12.2" lengthAdjust="spacingAndGlyphs">Sep</text>
<text x="564.4" y="510.7" font-size="7.2" fill="#d9d9d9" textLength="10.9" lengthAdjust="spacingAndGlyphs">Oct</text>
<text x="611.7" y="510.7" font-size="7.2" fill="#d9d9d9" textLength="12.0" lengthAdjust="spacingAndGlyphs">Nov</text>
<text x="658.0" y="510.7" font-size="7.2" fill="#d9d9d9" textLength="11.8" lengthAdjust="spacingAndGlyphs">Dec</text>
<text x="703.3" y="510.7" font-size="7.5" fill="#e4e4e4" class="b" font-weight="bold" textLength="16.8" lengthAdjust="spacingAndGlyphs">2026</text>
<text x="753.7" y="510.7" font-size="7.2" fill="#d9d9d9" textLength="11.6" lengthAdjust="spacingAndGlyphs">Feb</text>
<text x="795.7" y="510.7" font-size="7.2" fill="#d9d9d9" textLength="11.8" lengthAdjust="spacingAndGlyphs">Mar</text>
<text x="844.2" y="510.7" font-size="7.2" fill="#d9d9d9" textLength="10.8" lengthAdjust="spacingAndGlyphs">Apr</text>
<text x="889.3" y="510.7" font-size="7.2" fill="#d9d9d9" textLength="12.6" lengthAdjust="spacingAndGlyphs">May</text>
<text x="934.7" y="308.2" font-size="7.4" fill="#fff" class="b" font-weight="bold" textLength="21.6" lengthAdjust="spacingAndGlyphs">0.2580</text>
<text x="934.7" y="316.4" font-size="7.2" fill="#ffe3e6" textLength="28.3" lengthAdjust="spacingAndGlyphs">02:15:34</text>
<text x="934.9" y="430.2" font-size="7.2" fill="#111" textLength="17.7" lengthAdjust="spacingAndGlyphs">48.50</text>
<text x="934.9" y="440.5" font-size="7.2" fill="#fff" textLength="17.7" lengthAdjust="spacingAndGlyphs">46.24</text>
<text x="29.6" y="539.2" font-size="12.4" fill="#ededed" class="b" font-weight="bold" textLength="72.4" lengthAdjust="spacingAndGlyphs">TradingView</text>
</g>
<!-- TradingView logo -->
<g transform="translate(7,528) scale(0.512)" fill="#ededed">
<path d="M14 22H7V11H0V4h14v18zM28 22h-8l7.5-18h8L28 22z"/><circle cx="20" cy="8" r="4"/>
</g>
</svg>
</body></html>
